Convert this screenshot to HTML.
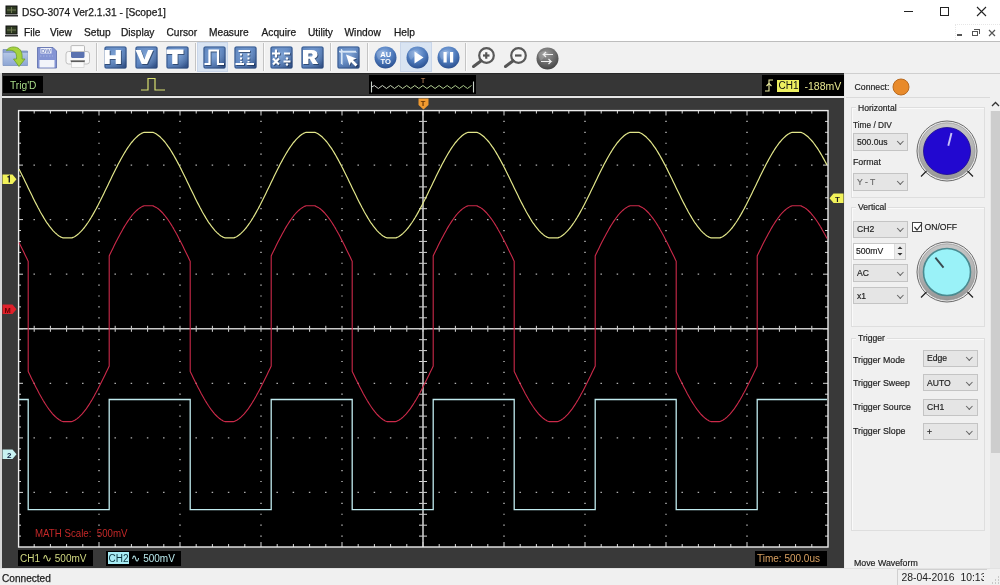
<!DOCTYPE html>
<html><head><meta charset="utf-8">
<style>
*{box-sizing:border-box}
html,body{margin:0;padding:0}
body{will-change:transform;width:1000px;height:585px;overflow:hidden;position:relative;background:#f0f0f0;font-family:"Liberation Sans",sans-serif;color:#1a1a1a}
.a{position:absolute}
.t{position:absolute;white-space:nowrap;line-height:1}
.d{-webkit-text-stroke:0.25px #1a1a1a}
#title{left:0;top:0;width:1000px;height:41px;background:#fff}
#tool{left:0;top:41px;width:1000px;height:32px;background:#f1f1f1;border-top:1px solid #bdbdbd}
#scope{left:0;top:73px;width:844px;height:495px;background:#393939;border-left:2px solid #d6d6d6}
#trig{left:2px;top:73px;width:842px;height:22.5px;background:#363636;border-top:1px solid #282828;border-bottom:1px solid #2a2a2a}
#wline{left:2px;top:95.5px;width:842px;height:2px;background:#e6e6e6}
#panel{left:844px;top:73px;width:156px;height:495px;background:#f0f0f0}
#status{left:0;top:568px;width:1000px;height:17px;background:#f0f0f0;border-top:1px solid #e2e2e2}
.combo{position:absolute;background:#e5e5e5;border:1px solid #c4c4c4}
.combo span{position:absolute;left:3px;top:50%;transform:translateY(-50%);font-size:8.6px;color:#222;-webkit-text-stroke:0.18px #222}
.chev{position:absolute;right:4.5px;top:50%;width:4.6px;height:4.6px;border-right:1px solid #666;border-bottom:1px solid #666;transform:translateY(-70%) rotate(45deg)}
.grp{position:absolute;border:1px solid #dedede;box-shadow:inset 1px 1px 0 #fafafa}
.lbl{position:absolute;white-space:nowrap;line-height:1;font-size:8.8px;color:#222;-webkit-text-stroke:0.18px #222}
</style></head><body>
<div id="title" class="a"></div>
<!-- title icon -->
<svg class="a" style="left:5px;top:5px" width="13" height="13" viewBox="0 0 13 13"><rect x="1" y="1" width="11" height="8" fill="#2e3a22" stroke="#111" stroke-width="1"/><path d="M2,5h9M6.5,2v6" stroke="#6f7a52" stroke-width="1"/><rect x="0" y="10" width="13" height="1.5" fill="#333"/></svg>
<div class="t d" style="left:22px;top:8px;font-size:10.2px;color:#1a1a1a">DSO-3074 Ver2.1.31 - [Scope1]</div>
<!-- window controls -->
<div class="a" style="left:904px;top:11px;width:9px;height:1px;background:#222"></div>
<div class="a" style="left:940px;top:7px;width:9px;height:9px;border:1px solid #222"></div>
<svg class="a" style="left:976px;top:6px" width="11" height="11"><path d="M1,1L10,10M10,1L1,10" stroke="#222" stroke-width="1.1"/></svg>
<!-- menu -->
<svg class="a" style="left:5px;top:25px" width="13" height="13" viewBox="0 0 13 13"><rect x="1" y="1" width="11" height="8" fill="#2e3a22" stroke="#111" stroke-width="1"/><path d="M2,5h9M6.5,2v6" stroke="#6f7a52" stroke-width="1"/><rect x="0" y="10" width="13" height="1.5" fill="#333"/></svg>
<div class="t d" style="left:24px;top:28px;font-size:10.2px">File</div>
<div class="t d" style="left:50px;top:28px;font-size:10.2px">View</div>
<div class="t d" style="left:84px;top:28px;font-size:10.2px">Setup</div>
<div class="t d" style="left:121px;top:28px;font-size:10.2px">Display</div>
<div class="t d" style="left:166.5px;top:28px;font-size:10.2px">Cursor</div>
<div class="t d" style="left:209px;top:28px;font-size:10.2px">Measure</div>
<div class="t d" style="left:261.5px;top:28px;font-size:10.2px">Acquire</div>
<div class="t d" style="left:308px;top:28px;font-size:10.2px">Utility</div>
<div class="t d" style="left:344.5px;top:28px;font-size:10.2px">Window</div>
<div class="t d" style="left:394px;top:28px;font-size:10.2px">Help</div>
<!-- mdi buttons -->
<div class="a" style="left:955px;top:24px;width:45px;height:16px;border-left:1px dotted #e6e6e6;border-top:1px dotted #e6e6e6"></div>
<div class="a" style="left:957px;top:34px;width:5px;height:1.5px;background:#555"></div>
<div class="a" style="left:972px;top:31px;width:6px;height:5px;border:1px solid #555"></div>
<div class="a" style="left:974px;top:29px;width:6px;height:5px;border-top:1px solid #555;border-right:1px solid #555"></div>
<svg class="a" style="left:988px;top:29px" width="8" height="8"><path d="M1,1L7,7M7,1L1,7" stroke="#555" stroke-width="1.2"/></svg>

<div id="tool" class="a"></div>
<svg class="a" style="left:2px;top:45px" width="27" height="23" viewBox="0 0 27 23">
<defs><linearGradient id="fold" x1="0" y1="0" x2="0" y2="1"><stop offset="0" stop-color="#b4c6e6"/><stop offset="1" stop-color="#8ea6d4"/></linearGradient></defs>
<path d="M1,4.5h8l1.5,1.5h15v14.5H1z" fill="#8ca2cc" stroke="#7088b8" stroke-width="0.7"/>
<path d="M1.3,8h24.4v12.2H1.3z" fill="url(#fold)"/>
<path d="M4.5,5.5C6,2 12,1 16,3C19.5,5 20.5,9 20,14h3l-6,7.5l-5.5,-7.5h3C15,10 14,7 11,5.8C9,5 6.5,5 4.5,5.5z" fill="#a6d23e" stroke="#6ca028" stroke-width="0.8"/>
</svg>
<svg class="a" style="left:37px;top:46.5px" width="21" height="22" viewBox="0 0 21 22">
<path d="M0.5,0.5h15.5l3.5,3.5v17H0.5z" fill="#8494d4" stroke="#6474b0" stroke-width="0.9"/>
<rect x="3.5" y="1" width="11" height="5.5" fill="#eef0fa"/><text x="4" y="6.2" font-size="6" font-weight="bold" font-family="Liberation Sans" fill="#8090c8">DW</text>
<path d="M3,9h13" stroke="#b0bce6" stroke-width="0.8" stroke-dasharray="1.5,1.5"/>
<rect x="2.5" y="13" width="15" height="7.5" fill="#f2f4fa"/>
</svg>
<svg class="a" style="left:65px;top:45px" width="26" height="24" viewBox="0 0 26 24">
<rect x="6" y="0.6" width="13.5" height="7.5" rx="1" fill="#fbfbfb" stroke="#a8a8a8" stroke-width="0.8"/>
<rect x="1" y="6.5" width="23.5" height="12.5" rx="2.5" fill="#f8f8f8" stroke="#b4b4b4" stroke-width="0.8"/>
<path d="M6,7h13.5v4.5c0,1 -1,1.5 -2,1.5h-9.5c-1,0 -2,-0.5 -2,-1.5z" fill="#5a72b0"/>
<path d="M5.5,15.5h14.5l-0.8,2h-13z" fill="#2e2e2e"/><rect x="6.5" y="17" width="12.5" height="5.5" fill="#fafafa" stroke="#c8c8c8" stroke-width="0.6"/>
</svg>
<div class="a" style="left:96px;top:43px;width:1px;height:28px;background:#c4c4c4"></div><div class="a" style="left:97px;top:43px;width:1px;height:28px;background:#fbfbfb"></div>
<div class="a" style="left:194.5px;top:43px;width:1px;height:28px;background:#c4c4c4"></div><div class="a" style="left:195.5px;top:43px;width:1px;height:28px;background:#fbfbfb"></div>
<div class="a" style="left:262.5px;top:43px;width:1px;height:28px;background:#c4c4c4"></div><div class="a" style="left:263.5px;top:43px;width:1px;height:28px;background:#fbfbfb"></div>
<div class="a" style="left:330px;top:43px;width:1px;height:28px;background:#c4c4c4"></div><div class="a" style="left:331px;top:43px;width:1px;height:28px;background:#fbfbfb"></div>
<div class="a" style="left:366.5px;top:43px;width:1px;height:28px;background:#c4c4c4"></div><div class="a" style="left:367.5px;top:43px;width:1px;height:28px;background:#fbfbfb"></div>
<div class="a" style="left:464.5px;top:43px;width:1px;height:28px;background:#c4c4c4"></div><div class="a" style="left:465.5px;top:43px;width:1px;height:28px;background:#fbfbfb"></div>
<div class="a" style="left:196.5px;top:42px;width:31.5px;height:30px;background:#d9e4f2;border:1px solid #c9d6ea"></div>
<div class="a" style="left:400px;top:42px;width:32px;height:30px;background:#d9e4f2;border:1px solid #c9d6ea"></div>
<svg class="a" style="left:103.5px;top:45.5px" width="23" height="23" viewBox="0 0 23 23">
<defs><linearGradient id="g103" x1="0" y1="0" x2="1" y2="1"><stop offset="0" stop-color="#5a82bc"/><stop offset="0.45" stop-color="#5c84c0"/><stop offset="1" stop-color="#2c4a7e"/></linearGradient>
<radialGradient id="h103" cx="50%" cy="40%" r="60%"><stop offset="0" stop-color="#8eb0dc" stop-opacity="0.7"/><stop offset="1" stop-color="#8eb0dc" stop-opacity="0"/></radialGradient>
<filter id="f103" x="-20%" y="-20%" width="140%" height="140%"><feGaussianBlur stdDeviation="0.45"/></filter></defs>
<g filter="url(#f103)"><rect x="0.5" y="0.5" width="22" height="22" rx="1.5" fill="url(#g103)"/>
<rect x="0.5" y="0.5" width="22" height="22" rx="1.5" fill="url(#h103)"/>
<rect x="1" y="1" width="21" height="21" rx="1.5" fill="none" stroke="#2a4674" stroke-width="1.2" stroke-opacity="0.6"/>
<g transform="translate(0.9,0.9)" opacity="0.55"><path d="M0.5,4h5.2v5.2h6V4h5.2v14h-5.2v-5h-6v5H0.5z" fill="#10203a"/></g>
<path d="M0.5,4h5.2v5.2h6V4h5.2v14h-5.2v-5h-6v5H0.5z" fill="#fff"/></g></svg>
<svg class="a" style="left:134.5px;top:45.5px" width="23" height="23" viewBox="0 0 23 23">
<defs><linearGradient id="g134" x1="0" y1="0" x2="1" y2="1"><stop offset="0" stop-color="#5a82bc"/><stop offset="0.45" stop-color="#5c84c0"/><stop offset="1" stop-color="#2c4a7e"/></linearGradient>
<radialGradient id="h134" cx="50%" cy="40%" r="60%"><stop offset="0" stop-color="#8eb0dc" stop-opacity="0.7"/><stop offset="1" stop-color="#8eb0dc" stop-opacity="0"/></radialGradient>
<filter id="f134" x="-20%" y="-20%" width="140%" height="140%"><feGaussianBlur stdDeviation="0.45"/></filter></defs>
<g filter="url(#f134)"><rect x="0.5" y="0.5" width="22" height="22" rx="1.5" fill="url(#g134)"/>
<rect x="0.5" y="0.5" width="22" height="22" rx="1.5" fill="url(#h134)"/>
<rect x="1" y="1" width="21" height="21" rx="1.5" fill="none" stroke="#2a4674" stroke-width="1.2" stroke-opacity="0.6"/>
<g transform="translate(0.9,0.9)" opacity="0.55"><path d="M0.5,4h5.3l3.6,9.5l3.6,-9.5h5.3l-6.2,14h-5.4z" fill="#10203a"/></g>
<path d="M0.5,4h5.3l3.6,9.5l3.6,-9.5h5.3l-6.2,14h-5.4z" fill="#fff"/></g></svg>
<svg class="a" style="left:166px;top:45.5px" width="23" height="23" viewBox="0 0 23 23">
<defs><linearGradient id="g166" x1="0" y1="0" x2="1" y2="1"><stop offset="0" stop-color="#5a82bc"/><stop offset="0.45" stop-color="#5c84c0"/><stop offset="1" stop-color="#2c4a7e"/></linearGradient>
<radialGradient id="h166" cx="50%" cy="40%" r="60%"><stop offset="0" stop-color="#8eb0dc" stop-opacity="0.7"/><stop offset="1" stop-color="#8eb0dc" stop-opacity="0"/></radialGradient>
<filter id="f166" x="-20%" y="-20%" width="140%" height="140%"><feGaussianBlur stdDeviation="0.45"/></filter></defs>
<g filter="url(#f166)"><rect x="0.5" y="0.5" width="22" height="22" rx="1.5" fill="url(#g166)"/>
<rect x="0.5" y="0.5" width="22" height="22" rx="1.5" fill="url(#h166)"/>
<rect x="1" y="1" width="21" height="21" rx="1.5" fill="none" stroke="#2a4674" stroke-width="1.2" stroke-opacity="0.6"/>
<g transform="translate(0.9,0.9)" opacity="0.55"><path d="M0.5,3.5h17v4.5h-5.9v10h-5.4v-10H0.5z" fill="#10203a"/></g>
<path d="M0.5,3.5h17v4.5h-5.9v10h-5.4v-10H0.5z" fill="#fff"/></g></svg>
<svg class="a" style="left:202.5px;top:45.5px" width="23" height="23" viewBox="0 0 23 23">
<defs><linearGradient id="g202" x1="0" y1="0" x2="1" y2="1"><stop offset="0" stop-color="#5a82bc"/><stop offset="0.45" stop-color="#5c84c0"/><stop offset="1" stop-color="#2c4a7e"/></linearGradient>
<radialGradient id="h202" cx="50%" cy="40%" r="60%"><stop offset="0" stop-color="#8eb0dc" stop-opacity="0.7"/><stop offset="1" stop-color="#8eb0dc" stop-opacity="0"/></radialGradient>
<filter id="f202" x="-20%" y="-20%" width="140%" height="140%"><feGaussianBlur stdDeviation="0.45"/></filter></defs>
<g filter="url(#f202)"><rect x="0.5" y="0.5" width="22" height="22" rx="1.5" fill="url(#g202)"/>
<rect x="0.5" y="0.5" width="22" height="22" rx="1.5" fill="url(#h202)"/>
<rect x="1" y="1" width="21" height="21" rx="1.5" fill="none" stroke="#2a4674" stroke-width="1.2" stroke-opacity="0.6"/>
<g transform="translate(0.9,0.9)" opacity="0.55"><path d="M1.5,18H6.5V4.5H15V18H21" stroke="#10203a" stroke-width="2.2" fill="none"/></g>
<path d="M1.5,18H6.5V4.5H15V18H21" stroke="#fff" stroke-width="2.2" fill="none"/></g></svg>
<svg class="a" style="left:233.5px;top:45.5px" width="23" height="23" viewBox="0 0 23 23">
<defs><linearGradient id="g233" x1="0" y1="0" x2="1" y2="1"><stop offset="0" stop-color="#5a82bc"/><stop offset="0.45" stop-color="#5c84c0"/><stop offset="1" stop-color="#2c4a7e"/></linearGradient>
<radialGradient id="h233" cx="50%" cy="40%" r="60%"><stop offset="0" stop-color="#8eb0dc" stop-opacity="0.7"/><stop offset="1" stop-color="#8eb0dc" stop-opacity="0"/></radialGradient>
<filter id="f233" x="-20%" y="-20%" width="140%" height="140%"><feGaussianBlur stdDeviation="0.45"/></filter></defs>
<g filter="url(#f233)"><rect x="0.5" y="0.5" width="22" height="22" rx="1.5" fill="url(#g233)"/>
<rect x="0.5" y="0.5" width="22" height="22" rx="1.5" fill="url(#h233)"/>
<rect x="1" y="1" width="21" height="21" rx="1.5" fill="none" stroke="#2a4674" stroke-width="1.2" stroke-opacity="0.6"/>
<g transform="translate(0.9,0.9)" opacity="0.55"><path d="M4.5,5H16M1.5,18H10M12.5,18H20" stroke="#10203a" stroke-width="2"/><path d="M7,7.5v2M7,11.5v2M7,15v1.5M14.5,7.5v2M14.5,11.5v2M14.5,15v1.5" stroke="#10203a" stroke-width="2"/></g>
<path d="M4.5,5H16M1.5,18H10M12.5,18H20" stroke="#fff" stroke-width="2"/><path d="M7,7.5v2M7,11.5v2M7,15v1.5M14.5,7.5v2M14.5,11.5v2M14.5,15v1.5" stroke="#fff" stroke-width="2"/></g></svg>
<svg class="a" style="left:269.5px;top:45.5px" width="23" height="23" viewBox="0 0 23 23">
<defs><linearGradient id="g269" x1="0" y1="0" x2="1" y2="1"><stop offset="0" stop-color="#5a82bc"/><stop offset="0.45" stop-color="#5c84c0"/><stop offset="1" stop-color="#2c4a7e"/></linearGradient>
<radialGradient id="h269" cx="50%" cy="40%" r="60%"><stop offset="0" stop-color="#8eb0dc" stop-opacity="0.7"/><stop offset="1" stop-color="#8eb0dc" stop-opacity="0"/></radialGradient>
<filter id="f269" x="-20%" y="-20%" width="140%" height="140%"><feGaussianBlur stdDeviation="0.45"/></filter></defs>
<g filter="url(#f269)"><rect x="0.5" y="0.5" width="22" height="22" rx="1.5" fill="url(#g269)"/>
<rect x="0.5" y="0.5" width="22" height="22" rx="1.5" fill="url(#h269)"/>
<rect x="1" y="1" width="21" height="21" rx="1.5" fill="none" stroke="#2a4674" stroke-width="1.2" stroke-opacity="0.6"/>
<g transform="translate(0.9,0.9)" opacity="0.55"><path d="M2,7.5h8M6,3.5v8M14,7.5h6M3,12.5l6,6M9,12.5l-6,6M13.5,15.5h7" stroke="#10203a" stroke-width="2.2"/><circle cx="17" cy="12.5" r="1.2" fill="#10203a"/><circle cx="17" cy="18.5" r="1.2" fill="#10203a"/></g>
<path d="M2,7.5h8M6,3.5v8M14,7.5h6M3,12.5l6,6M9,12.5l-6,6M13.5,15.5h7" stroke="#fff" stroke-width="2.2"/><circle cx="17" cy="12.5" r="1.2" fill="#fff"/><circle cx="17" cy="18.5" r="1.2" fill="#fff"/></g></svg>
<svg class="a" style="left:300.5px;top:45.5px" width="23" height="23" viewBox="0 0 23 23">
<defs><linearGradient id="g300" x1="0" y1="0" x2="1" y2="1"><stop offset="0" stop-color="#5a82bc"/><stop offset="0.45" stop-color="#5c84c0"/><stop offset="1" stop-color="#2c4a7e"/></linearGradient>
<radialGradient id="h300" cx="50%" cy="40%" r="60%"><stop offset="0" stop-color="#8eb0dc" stop-opacity="0.7"/><stop offset="1" stop-color="#8eb0dc" stop-opacity="0"/></radialGradient>
<filter id="f300" x="-20%" y="-20%" width="140%" height="140%"><feGaussianBlur stdDeviation="0.45"/></filter></defs>
<g filter="url(#f300)"><rect x="0.5" y="0.5" width="22" height="22" rx="1.5" fill="url(#g300)"/>
<rect x="0.5" y="0.5" width="22" height="22" rx="1.5" fill="url(#h300)"/>
<rect x="1" y="1" width="21" height="21" rx="1.5" fill="none" stroke="#2a4674" stroke-width="1.2" stroke-opacity="0.6"/>
<g transform="translate(0.9,0.9)" opacity="0.55"><path d="M2,4h8.5c4,0 6,1.6 6,4.4c0,2 -1.2,3.2 -3,3.8l3.8,5.8h-5.6l-3,-5.2h-1.3v5.2H2z M7.4,7.6v3h2.4c1.2,0 1.8,-0.5 1.8,-1.5c0,-1 -0.6,-1.5 -1.8,-1.5z" fill-rule="evenodd" fill="#10203a"/></g>
<path d="M2,4h8.5c4,0 6,1.6 6,4.4c0,2 -1.2,3.2 -3,3.8l3.8,5.8h-5.6l-3,-5.2h-1.3v5.2H2z M7.4,7.6v3h2.4c1.2,0 1.8,-0.5 1.8,-1.5c0,-1 -0.6,-1.5 -1.8,-1.5z" fill-rule="evenodd" fill="#fff"/></g></svg>
<svg class="a" style="left:336.5px;top:45.5px" width="23" height="23" viewBox="0 0 23 23">
<defs><linearGradient id="g336" x1="0" y1="0" x2="1" y2="1"><stop offset="0" stop-color="#5a82bc"/><stop offset="0.45" stop-color="#5c84c0"/><stop offset="1" stop-color="#2c4a7e"/></linearGradient>
<radialGradient id="h336" cx="50%" cy="40%" r="60%"><stop offset="0" stop-color="#8eb0dc" stop-opacity="0.7"/><stop offset="1" stop-color="#8eb0dc" stop-opacity="0"/></radialGradient>
<filter id="f336" x="-20%" y="-20%" width="140%" height="140%"><feGaussianBlur stdDeviation="0.45"/></filter></defs>
<g filter="url(#f336)"><rect x="0.5" y="0.5" width="22" height="22" rx="1.5" fill="url(#g336)"/>
<rect x="0.5" y="0.5" width="22" height="22" rx="1.5" fill="url(#h336)"/>
<rect x="1" y="1" width="21" height="21" rx="1.5" fill="none" stroke="#2a4674" stroke-width="1.2" stroke-opacity="0.6"/>
<g transform="translate(0.9,0.9)" opacity="0.55"><path d="M2,5.5h17M4.5,3v15" stroke="#d8e6f6" stroke-width="1.3"/><path d="M9,8.5L19.5,12.5L16,14L20.5,18.5L18.5,20.5L14,16L12.5,19.5z" fill="#10203a"/></g>
<path d="M2,5.5h17M4.5,3v15" stroke="#d8e6f6" stroke-width="1.3"/><path d="M9,8.5L19.5,12.5L16,14L20.5,18.5L18.5,20.5L14,16L12.5,19.5z" fill="#fff"/></g></svg>
<svg class="a" style="left:373.5px;top:46px" width="23" height="23" viewBox="0 0 23 23">
<defs><radialGradient id="c373" cx="45%" cy="30%" r="75%"><stop offset="0" stop-color="#8cb0e2"/><stop offset="0.55" stop-color="#4c78ba"/><stop offset="1" stop-color="#274a88"/></radialGradient>
<filter id="cf373" x="-20%" y="-20%" width="140%" height="140%"><feGaussianBlur stdDeviation="0.4"/></filter></defs>
<g filter="url(#cf373)"><circle cx="11.5" cy="11.5" r="11" fill="url(#c373)"/>
<path d="M2.5,6.5C5,4 9,3.5 12,6L5,14C3,11.5 2,9 2.5,6.5z" fill="#fff" fill-opacity="0.18"/>
<text x="11.7" y="11" font-size="7.6" font-family="Liberation Sans" font-weight="bold" fill="#fff" text-anchor="middle">AU</text><text x="11.7" y="18.2" font-size="7.6" font-family="Liberation Sans" font-weight="bold" fill="#fff" text-anchor="middle">TO</text></g></svg>
<svg class="a" style="left:405.5px;top:46px" width="23" height="23" viewBox="0 0 23 23">
<defs><radialGradient id="c405" cx="45%" cy="30%" r="75%"><stop offset="0" stop-color="#8cb0e2"/><stop offset="0.55" stop-color="#4c78ba"/><stop offset="1" stop-color="#274a88"/></radialGradient>
<filter id="cf405" x="-20%" y="-20%" width="140%" height="140%"><feGaussianBlur stdDeviation="0.4"/></filter></defs>
<g filter="url(#cf405)"><circle cx="11.5" cy="11.5" r="11" fill="url(#c405)"/>
<path d="M2.5,6.5C5,4 9,3.5 12,6L5,14C3,11.5 2,9 2.5,6.5z" fill="#fff" fill-opacity="0.18"/>
<path d="M8.5,5.5L17.5,11.5L8.5,17.5z" fill="#fff"/></g></svg>
<svg class="a" style="left:436.5px;top:46px" width="23" height="23" viewBox="0 0 23 23">
<defs><radialGradient id="c436" cx="45%" cy="30%" r="75%"><stop offset="0" stop-color="#8cb0e2"/><stop offset="0.55" stop-color="#4c78ba"/><stop offset="1" stop-color="#274a88"/></radialGradient>
<filter id="cf436" x="-20%" y="-20%" width="140%" height="140%"><feGaussianBlur stdDeviation="0.4"/></filter></defs>
<g filter="url(#cf436)"><circle cx="11.5" cy="11.5" r="11" fill="url(#c436)"/>
<path d="M2.5,6.5C5,4 9,3.5 12,6L5,14C3,11.5 2,9 2.5,6.5z" fill="#fff" fill-opacity="0.18"/>
<rect x="6.5" y="6" width="3.2" height="10.5" fill="#fff"/><rect x="13" y="6" width="3.2" height="10.5" fill="#fff"/></g></svg>
<svg class="a" style="left:470px;top:46px" width="26" height="24" viewBox="0 0 26 24"><circle cx="16.5" cy="9.5" r="7.3" fill="#f6f6f6" stroke="#5a5a5a" stroke-width="2.2"/><path d="M11.2,14.8L3.5,20.5" stroke="#555" stroke-width="3" stroke-linecap="round"/><path d="M13,9.5h6.5" stroke="#555" stroke-width="2.2"/><path d="M16.25,6.25v6.5" stroke="#555" stroke-width="2.2"/></svg>
<svg class="a" style="left:501.5px;top:46px" width="26" height="24" viewBox="0 0 26 24"><circle cx="16.5" cy="9.5" r="7.3" fill="#f6f6f6" stroke="#5a5a5a" stroke-width="2.2"/><path d="M11.2,14.8L3.5,20.5" stroke="#555" stroke-width="3" stroke-linecap="round"/><path d="M13,9.5h6.5" stroke="#555" stroke-width="2.2"/></svg>
<svg class="a" style="left:535.5px;top:46.5px" width="23" height="23" viewBox="0 0 23 23">
<defs><radialGradient id="c535" cx="45%" cy="30%" r="75%"><stop offset="0" stop-color="#9a9a9a"/><stop offset="0.55" stop-color="#6a6a6a"/><stop offset="1" stop-color="#3e3e3e"/></radialGradient>
<filter id="cf535" x="-20%" y="-20%" width="140%" height="140%"><feGaussianBlur stdDeviation="0.4"/></filter></defs>
<g filter="url(#cf535)"><circle cx="11.5" cy="11.5" r="11" fill="url(#c535)"/>
<path d="M2.5,6.5C5,4 9,3.5 12,6L5,14C3,11.5 2,9 2.5,6.5z" fill="#fff" fill-opacity="0.18"/>
<path d="M17,7.5H7.5l2.5,-2.5M7.5,7.5l2.5,2.5M5,14.5h10l-2.5,-2.5M15,14.5l-2.5,2.5" stroke="#f0f0f0" stroke-width="1.2" fill="none"/></g></svg>

<div id="scope" class="a"></div>
<div id="trig" class="a"></div>
<div class="a" style="left:2.5px;top:76px;width:40.5px;height:17px;background:#000"></div>
<div class="t" style="left:10px;top:80.5px;font-size:10.2px;color:#a8dc88">Trig'D</div>
<svg class="a" style="left:140px;top:76px" width="28" height="16"><path d="M1,14H8V2.5H15V14H25" stroke="#d8e070" stroke-width="1.2" fill="none"/></svg>
<div class="a" style="left:369px;top:75px;width:107px;height:19px;background:#000"></div>
<svg class="a" style="left:369px;top:75px" width="107" height="19">
<text x="54" y="7.5" font-size="7.5" fill="#d89868" font-family="Liberation Sans" text-anchor="middle">T</text>
<path d="M2.5,6.5v11M104.5,6.5v11" stroke="#c8d0c8" stroke-width="1.1"/>
<defs><linearGradient id="zz" x1="0" x2="1"><stop offset="0" stop-color="#d8d8d8"/><stop offset="0.35" stop-color="#b8d098"/><stop offset="1" stop-color="#a8c888"/></linearGradient></defs><polyline points="2.8,12 5.30,10.5 9.35,13.5 13.40,10.5 17.45,13.5 21.50,10.5 25.55,13.5 29.60,10.5 33.65,13.5 37.70,10.5 41.75,13.5 45.80,10.5 49.85,13.5 53.90,10.5 57.95,13.5 62.00,10.5 66.05,13.5 70.10,10.5 74.15,13.5 78.20,10.5 82.25,13.5 86.30,10.5 90.35,13.5 94.40,10.5 98.45,13.5 102.50,10.5" stroke="url(#zz)" stroke-width="1" fill="none"/>
</svg>
<div class="a" style="left:762px;top:74.5px;width:82px;height:21px;background:#000"></div>
<svg class="a" style="left:764px;top:77px" width="12" height="16"><path d="M1,14H5V3H9" stroke="#f0f0a0" stroke-width="1.1" fill="none"/><path d="M2.5,9L5,6.5L7.5,9" stroke="#f0f0a0" stroke-width="1.1" fill="none"/></svg>
<div class="a" style="left:777px;top:79.5px;width:22px;height:12.5px;background:#eef060"></div>
<div class="t" style="left:778.5px;top:81px;font-size:10px;color:#111">CH1</div>
<div class="t" style="left:804.5px;top:81.3px;font-size:10.5px;color:#e8e890">-188mV</div>
<div id="wline" class="a"></div>

<svg width="1000" height="585" viewBox="0 0 1000 585" style="position:absolute;left:0;top:0">
<rect x="18" y="110.5" width="810" height="436.5" fill="#000"/>
<path d="M98.25,120.81h1.5v1.2h-1.5zM98.25,131.72h1.5v1.2h-1.5zM98.25,142.64h1.5v1.2h-1.5zM98.25,153.55h1.5v1.2h-1.5zM98.25,164.46h1.5v1.2h-1.5zM98.25,175.38h1.5v1.2h-1.5zM98.25,186.29h1.5v1.2h-1.5zM98.25,197.20h1.5v1.2h-1.5zM98.25,208.11h1.5v1.2h-1.5zM98.25,219.03h1.5v1.2h-1.5zM98.25,229.94h1.5v1.2h-1.5zM98.25,240.85h1.5v1.2h-1.5zM98.25,251.76h1.5v1.2h-1.5zM98.25,262.67h1.5v1.2h-1.5zM98.25,273.59h1.5v1.2h-1.5zM98.25,284.50h1.5v1.2h-1.5zM98.25,295.41h1.5v1.2h-1.5zM98.25,306.32h1.5v1.2h-1.5zM98.25,317.24h1.5v1.2h-1.5zM98.25,339.06h1.5v1.2h-1.5zM98.25,349.97h1.5v1.2h-1.5zM98.25,360.89h1.5v1.2h-1.5zM98.25,371.80h1.5v1.2h-1.5zM98.25,382.71h1.5v1.2h-1.5zM98.25,393.62h1.5v1.2h-1.5zM98.25,404.54h1.5v1.2h-1.5zM98.25,415.45h1.5v1.2h-1.5zM98.25,426.36h1.5v1.2h-1.5zM98.25,437.27h1.5v1.2h-1.5zM98.25,448.19h1.5v1.2h-1.5zM98.25,459.10h1.5v1.2h-1.5zM98.25,470.01h1.5v1.2h-1.5zM98.25,480.92h1.5v1.2h-1.5zM98.25,491.84h1.5v1.2h-1.5zM98.25,502.75h1.5v1.2h-1.5zM98.25,513.66h1.5v1.2h-1.5zM98.25,524.57h1.5v1.2h-1.5zM98.25,535.49h1.5v1.2h-1.5zM179.25,120.81h1.5v1.2h-1.5zM179.25,131.72h1.5v1.2h-1.5zM179.25,142.64h1.5v1.2h-1.5zM179.25,153.55h1.5v1.2h-1.5zM179.25,164.46h1.5v1.2h-1.5zM179.25,175.38h1.5v1.2h-1.5zM179.25,186.29h1.5v1.2h-1.5zM179.25,197.20h1.5v1.2h-1.5zM179.25,208.11h1.5v1.2h-1.5zM179.25,219.03h1.5v1.2h-1.5zM179.25,229.94h1.5v1.2h-1.5zM179.25,240.85h1.5v1.2h-1.5zM179.25,251.76h1.5v1.2h-1.5zM179.25,262.67h1.5v1.2h-1.5zM179.25,273.59h1.5v1.2h-1.5zM179.25,284.50h1.5v1.2h-1.5zM179.25,295.41h1.5v1.2h-1.5zM179.25,306.32h1.5v1.2h-1.5zM179.25,317.24h1.5v1.2h-1.5zM179.25,339.06h1.5v1.2h-1.5zM179.25,349.97h1.5v1.2h-1.5zM179.25,360.89h1.5v1.2h-1.5zM179.25,371.80h1.5v1.2h-1.5zM179.25,382.71h1.5v1.2h-1.5zM179.25,393.62h1.5v1.2h-1.5zM179.25,404.54h1.5v1.2h-1.5zM179.25,415.45h1.5v1.2h-1.5zM179.25,426.36h1.5v1.2h-1.5zM179.25,437.27h1.5v1.2h-1.5zM179.25,448.19h1.5v1.2h-1.5zM179.25,459.10h1.5v1.2h-1.5zM179.25,470.01h1.5v1.2h-1.5zM179.25,480.92h1.5v1.2h-1.5zM179.25,491.84h1.5v1.2h-1.5zM179.25,502.75h1.5v1.2h-1.5zM179.25,513.66h1.5v1.2h-1.5zM179.25,524.57h1.5v1.2h-1.5zM179.25,535.49h1.5v1.2h-1.5zM260.25,120.81h1.5v1.2h-1.5zM260.25,131.72h1.5v1.2h-1.5zM260.25,142.64h1.5v1.2h-1.5zM260.25,153.55h1.5v1.2h-1.5zM260.25,164.46h1.5v1.2h-1.5zM260.25,175.38h1.5v1.2h-1.5zM260.25,186.29h1.5v1.2h-1.5zM260.25,197.20h1.5v1.2h-1.5zM260.25,208.11h1.5v1.2h-1.5zM260.25,219.03h1.5v1.2h-1.5zM260.25,229.94h1.5v1.2h-1.5zM260.25,240.85h1.5v1.2h-1.5zM260.25,251.76h1.5v1.2h-1.5zM260.25,262.67h1.5v1.2h-1.5zM260.25,273.59h1.5v1.2h-1.5zM260.25,284.50h1.5v1.2h-1.5zM260.25,295.41h1.5v1.2h-1.5zM260.25,306.32h1.5v1.2h-1.5zM260.25,317.24h1.5v1.2h-1.5zM260.25,339.06h1.5v1.2h-1.5zM260.25,349.97h1.5v1.2h-1.5zM260.25,360.89h1.5v1.2h-1.5zM260.25,371.80h1.5v1.2h-1.5zM260.25,382.71h1.5v1.2h-1.5zM260.25,393.62h1.5v1.2h-1.5zM260.25,404.54h1.5v1.2h-1.5zM260.25,415.45h1.5v1.2h-1.5zM260.25,426.36h1.5v1.2h-1.5zM260.25,437.27h1.5v1.2h-1.5zM260.25,448.19h1.5v1.2h-1.5zM260.25,459.10h1.5v1.2h-1.5zM260.25,470.01h1.5v1.2h-1.5zM260.25,480.92h1.5v1.2h-1.5zM260.25,491.84h1.5v1.2h-1.5zM260.25,502.75h1.5v1.2h-1.5zM260.25,513.66h1.5v1.2h-1.5zM260.25,524.57h1.5v1.2h-1.5zM260.25,535.49h1.5v1.2h-1.5zM341.25,120.81h1.5v1.2h-1.5zM341.25,131.72h1.5v1.2h-1.5zM341.25,142.64h1.5v1.2h-1.5zM341.25,153.55h1.5v1.2h-1.5zM341.25,164.46h1.5v1.2h-1.5zM341.25,175.38h1.5v1.2h-1.5zM341.25,186.29h1.5v1.2h-1.5zM341.25,197.20h1.5v1.2h-1.5zM341.25,208.11h1.5v1.2h-1.5zM341.25,219.03h1.5v1.2h-1.5zM341.25,229.94h1.5v1.2h-1.5zM341.25,240.85h1.5v1.2h-1.5zM341.25,251.76h1.5v1.2h-1.5zM341.25,262.67h1.5v1.2h-1.5zM341.25,273.59h1.5v1.2h-1.5zM341.25,284.50h1.5v1.2h-1.5zM341.25,295.41h1.5v1.2h-1.5zM341.25,306.32h1.5v1.2h-1.5zM341.25,317.24h1.5v1.2h-1.5zM341.25,339.06h1.5v1.2h-1.5zM341.25,349.97h1.5v1.2h-1.5zM341.25,360.89h1.5v1.2h-1.5zM341.25,371.80h1.5v1.2h-1.5zM341.25,382.71h1.5v1.2h-1.5zM341.25,393.62h1.5v1.2h-1.5zM341.25,404.54h1.5v1.2h-1.5zM341.25,415.45h1.5v1.2h-1.5zM341.25,426.36h1.5v1.2h-1.5zM341.25,437.27h1.5v1.2h-1.5zM341.25,448.19h1.5v1.2h-1.5zM341.25,459.10h1.5v1.2h-1.5zM341.25,470.01h1.5v1.2h-1.5zM341.25,480.92h1.5v1.2h-1.5zM341.25,491.84h1.5v1.2h-1.5zM341.25,502.75h1.5v1.2h-1.5zM341.25,513.66h1.5v1.2h-1.5zM341.25,524.57h1.5v1.2h-1.5zM341.25,535.49h1.5v1.2h-1.5zM503.25,120.81h1.5v1.2h-1.5zM503.25,131.72h1.5v1.2h-1.5zM503.25,142.64h1.5v1.2h-1.5zM503.25,153.55h1.5v1.2h-1.5zM503.25,164.46h1.5v1.2h-1.5zM503.25,175.38h1.5v1.2h-1.5zM503.25,186.29h1.5v1.2h-1.5zM503.25,197.20h1.5v1.2h-1.5zM503.25,208.11h1.5v1.2h-1.5zM503.25,219.03h1.5v1.2h-1.5zM503.25,229.94h1.5v1.2h-1.5zM503.25,240.85h1.5v1.2h-1.5zM503.25,251.76h1.5v1.2h-1.5zM503.25,262.67h1.5v1.2h-1.5zM503.25,273.59h1.5v1.2h-1.5zM503.25,284.50h1.5v1.2h-1.5zM503.25,295.41h1.5v1.2h-1.5zM503.25,306.32h1.5v1.2h-1.5zM503.25,317.24h1.5v1.2h-1.5zM503.25,339.06h1.5v1.2h-1.5zM503.25,349.97h1.5v1.2h-1.5zM503.25,360.89h1.5v1.2h-1.5zM503.25,371.80h1.5v1.2h-1.5zM503.25,382.71h1.5v1.2h-1.5zM503.25,393.62h1.5v1.2h-1.5zM503.25,404.54h1.5v1.2h-1.5zM503.25,415.45h1.5v1.2h-1.5zM503.25,426.36h1.5v1.2h-1.5zM503.25,437.27h1.5v1.2h-1.5zM503.25,448.19h1.5v1.2h-1.5zM503.25,459.10h1.5v1.2h-1.5zM503.25,470.01h1.5v1.2h-1.5zM503.25,480.92h1.5v1.2h-1.5zM503.25,491.84h1.5v1.2h-1.5zM503.25,502.75h1.5v1.2h-1.5zM503.25,513.66h1.5v1.2h-1.5zM503.25,524.57h1.5v1.2h-1.5zM503.25,535.49h1.5v1.2h-1.5zM584.25,120.81h1.5v1.2h-1.5zM584.25,131.72h1.5v1.2h-1.5zM584.25,142.64h1.5v1.2h-1.5zM584.25,153.55h1.5v1.2h-1.5zM584.25,164.46h1.5v1.2h-1.5zM584.25,175.38h1.5v1.2h-1.5zM584.25,186.29h1.5v1.2h-1.5zM584.25,197.20h1.5v1.2h-1.5zM584.25,208.11h1.5v1.2h-1.5zM584.25,219.03h1.5v1.2h-1.5zM584.25,229.94h1.5v1.2h-1.5zM584.25,240.85h1.5v1.2h-1.5zM584.25,251.76h1.5v1.2h-1.5zM584.25,262.67h1.5v1.2h-1.5zM584.25,273.59h1.5v1.2h-1.5zM584.25,284.50h1.5v1.2h-1.5zM584.25,295.41h1.5v1.2h-1.5zM584.25,306.32h1.5v1.2h-1.5zM584.25,317.24h1.5v1.2h-1.5zM584.25,339.06h1.5v1.2h-1.5zM584.25,349.97h1.5v1.2h-1.5zM584.25,360.89h1.5v1.2h-1.5zM584.25,371.80h1.5v1.2h-1.5zM584.25,382.71h1.5v1.2h-1.5zM584.25,393.62h1.5v1.2h-1.5zM584.25,404.54h1.5v1.2h-1.5zM584.25,415.45h1.5v1.2h-1.5zM584.25,426.36h1.5v1.2h-1.5zM584.25,437.27h1.5v1.2h-1.5zM584.25,448.19h1.5v1.2h-1.5zM584.25,459.10h1.5v1.2h-1.5zM584.25,470.01h1.5v1.2h-1.5zM584.25,480.92h1.5v1.2h-1.5zM584.25,491.84h1.5v1.2h-1.5zM584.25,502.75h1.5v1.2h-1.5zM584.25,513.66h1.5v1.2h-1.5zM584.25,524.57h1.5v1.2h-1.5zM584.25,535.49h1.5v1.2h-1.5zM665.25,120.81h1.5v1.2h-1.5zM665.25,131.72h1.5v1.2h-1.5zM665.25,142.64h1.5v1.2h-1.5zM665.25,153.55h1.5v1.2h-1.5zM665.25,164.46h1.5v1.2h-1.5zM665.25,175.38h1.5v1.2h-1.5zM665.25,186.29h1.5v1.2h-1.5zM665.25,197.20h1.5v1.2h-1.5zM665.25,208.11h1.5v1.2h-1.5zM665.25,219.03h1.5v1.2h-1.5zM665.25,229.94h1.5v1.2h-1.5zM665.25,240.85h1.5v1.2h-1.5zM665.25,251.76h1.5v1.2h-1.5zM665.25,262.67h1.5v1.2h-1.5zM665.25,273.59h1.5v1.2h-1.5zM665.25,284.50h1.5v1.2h-1.5zM665.25,295.41h1.5v1.2h-1.5zM665.25,306.32h1.5v1.2h-1.5zM665.25,317.24h1.5v1.2h-1.5zM665.25,339.06h1.5v1.2h-1.5zM665.25,349.97h1.5v1.2h-1.5zM665.25,360.89h1.5v1.2h-1.5zM665.25,371.80h1.5v1.2h-1.5zM665.25,382.71h1.5v1.2h-1.5zM665.25,393.62h1.5v1.2h-1.5zM665.25,404.54h1.5v1.2h-1.5zM665.25,415.45h1.5v1.2h-1.5zM665.25,426.36h1.5v1.2h-1.5zM665.25,437.27h1.5v1.2h-1.5zM665.25,448.19h1.5v1.2h-1.5zM665.25,459.10h1.5v1.2h-1.5zM665.25,470.01h1.5v1.2h-1.5zM665.25,480.92h1.5v1.2h-1.5zM665.25,491.84h1.5v1.2h-1.5zM665.25,502.75h1.5v1.2h-1.5zM665.25,513.66h1.5v1.2h-1.5zM665.25,524.57h1.5v1.2h-1.5zM665.25,535.49h1.5v1.2h-1.5zM746.25,120.81h1.5v1.2h-1.5zM746.25,131.72h1.5v1.2h-1.5zM746.25,142.64h1.5v1.2h-1.5zM746.25,153.55h1.5v1.2h-1.5zM746.25,164.46h1.5v1.2h-1.5zM746.25,175.38h1.5v1.2h-1.5zM746.25,186.29h1.5v1.2h-1.5zM746.25,197.20h1.5v1.2h-1.5zM746.25,208.11h1.5v1.2h-1.5zM746.25,219.03h1.5v1.2h-1.5zM746.25,229.94h1.5v1.2h-1.5zM746.25,240.85h1.5v1.2h-1.5zM746.25,251.76h1.5v1.2h-1.5zM746.25,262.67h1.5v1.2h-1.5zM746.25,273.59h1.5v1.2h-1.5zM746.25,284.50h1.5v1.2h-1.5zM746.25,295.41h1.5v1.2h-1.5zM746.25,306.32h1.5v1.2h-1.5zM746.25,317.24h1.5v1.2h-1.5zM746.25,339.06h1.5v1.2h-1.5zM746.25,349.97h1.5v1.2h-1.5zM746.25,360.89h1.5v1.2h-1.5zM746.25,371.80h1.5v1.2h-1.5zM746.25,382.71h1.5v1.2h-1.5zM746.25,393.62h1.5v1.2h-1.5zM746.25,404.54h1.5v1.2h-1.5zM746.25,415.45h1.5v1.2h-1.5zM746.25,426.36h1.5v1.2h-1.5zM746.25,437.27h1.5v1.2h-1.5zM746.25,448.19h1.5v1.2h-1.5zM746.25,459.10h1.5v1.2h-1.5zM746.25,470.01h1.5v1.2h-1.5zM746.25,480.92h1.5v1.2h-1.5zM746.25,491.84h1.5v1.2h-1.5zM746.25,502.75h1.5v1.2h-1.5zM746.25,513.66h1.5v1.2h-1.5zM746.25,524.57h1.5v1.2h-1.5zM746.25,535.49h1.5v1.2h-1.5zM33.45,164.46h1.5v1.2h-1.5zM49.65,164.46h1.5v1.2h-1.5zM65.85,164.46h1.5v1.2h-1.5zM82.05,164.46h1.5v1.2h-1.5zM98.25,164.46h1.5v1.2h-1.5zM114.45,164.46h1.5v1.2h-1.5zM130.65,164.46h1.5v1.2h-1.5zM146.85,164.46h1.5v1.2h-1.5zM163.05,164.46h1.5v1.2h-1.5zM179.25,164.46h1.5v1.2h-1.5zM195.45,164.46h1.5v1.2h-1.5zM211.65,164.46h1.5v1.2h-1.5zM227.85,164.46h1.5v1.2h-1.5zM244.05,164.46h1.5v1.2h-1.5zM260.25,164.46h1.5v1.2h-1.5zM276.45,164.46h1.5v1.2h-1.5zM292.65,164.46h1.5v1.2h-1.5zM308.85,164.46h1.5v1.2h-1.5zM325.05,164.46h1.5v1.2h-1.5zM341.25,164.46h1.5v1.2h-1.5zM357.45,164.46h1.5v1.2h-1.5zM373.65,164.46h1.5v1.2h-1.5zM389.85,164.46h1.5v1.2h-1.5zM406.05,164.46h1.5v1.2h-1.5zM438.45,164.46h1.5v1.2h-1.5zM454.65,164.46h1.5v1.2h-1.5zM470.85,164.46h1.5v1.2h-1.5zM487.05,164.46h1.5v1.2h-1.5zM503.25,164.46h1.5v1.2h-1.5zM519.45,164.46h1.5v1.2h-1.5zM535.65,164.46h1.5v1.2h-1.5zM551.85,164.46h1.5v1.2h-1.5zM568.05,164.46h1.5v1.2h-1.5zM584.25,164.46h1.5v1.2h-1.5zM600.45,164.46h1.5v1.2h-1.5zM616.65,164.46h1.5v1.2h-1.5zM632.85,164.46h1.5v1.2h-1.5zM649.05,164.46h1.5v1.2h-1.5zM665.25,164.46h1.5v1.2h-1.5zM681.45,164.46h1.5v1.2h-1.5zM697.65,164.46h1.5v1.2h-1.5zM713.85,164.46h1.5v1.2h-1.5zM730.05,164.46h1.5v1.2h-1.5zM746.25,164.46h1.5v1.2h-1.5zM762.45,164.46h1.5v1.2h-1.5zM778.65,164.46h1.5v1.2h-1.5zM794.85,164.46h1.5v1.2h-1.5zM811.05,164.46h1.5v1.2h-1.5zM33.45,219.03h1.5v1.2h-1.5zM49.65,219.03h1.5v1.2h-1.5zM65.85,219.03h1.5v1.2h-1.5zM82.05,219.03h1.5v1.2h-1.5zM98.25,219.03h1.5v1.2h-1.5zM114.45,219.03h1.5v1.2h-1.5zM130.65,219.03h1.5v1.2h-1.5zM146.85,219.03h1.5v1.2h-1.5zM163.05,219.03h1.5v1.2h-1.5zM179.25,219.03h1.5v1.2h-1.5zM195.45,219.03h1.5v1.2h-1.5zM211.65,219.03h1.5v1.2h-1.5zM227.85,219.03h1.5v1.2h-1.5zM244.05,219.03h1.5v1.2h-1.5zM260.25,219.03h1.5v1.2h-1.5zM276.45,219.03h1.5v1.2h-1.5zM292.65,219.03h1.5v1.2h-1.5zM308.85,219.03h1.5v1.2h-1.5zM325.05,219.03h1.5v1.2h-1.5zM341.25,219.03h1.5v1.2h-1.5zM357.45,219.03h1.5v1.2h-1.5zM373.65,219.03h1.5v1.2h-1.5zM389.85,219.03h1.5v1.2h-1.5zM406.05,219.03h1.5v1.2h-1.5zM438.45,219.03h1.5v1.2h-1.5zM454.65,219.03h1.5v1.2h-1.5zM470.85,219.03h1.5v1.2h-1.5zM487.05,219.03h1.5v1.2h-1.5zM503.25,219.03h1.5v1.2h-1.5zM519.45,219.03h1.5v1.2h-1.5zM535.65,219.03h1.5v1.2h-1.5zM551.85,219.03h1.5v1.2h-1.5zM568.05,219.03h1.5v1.2h-1.5zM584.25,219.03h1.5v1.2h-1.5zM600.45,219.03h1.5v1.2h-1.5zM616.65,219.03h1.5v1.2h-1.5zM632.85,219.03h1.5v1.2h-1.5zM649.05,219.03h1.5v1.2h-1.5zM665.25,219.03h1.5v1.2h-1.5zM681.45,219.03h1.5v1.2h-1.5zM697.65,219.03h1.5v1.2h-1.5zM713.85,219.03h1.5v1.2h-1.5zM730.05,219.03h1.5v1.2h-1.5zM746.25,219.03h1.5v1.2h-1.5zM762.45,219.03h1.5v1.2h-1.5zM778.65,219.03h1.5v1.2h-1.5zM794.85,219.03h1.5v1.2h-1.5zM811.05,219.03h1.5v1.2h-1.5zM33.45,273.59h1.5v1.2h-1.5zM49.65,273.59h1.5v1.2h-1.5zM65.85,273.59h1.5v1.2h-1.5zM82.05,273.59h1.5v1.2h-1.5zM98.25,273.59h1.5v1.2h-1.5zM114.45,273.59h1.5v1.2h-1.5zM130.65,273.59h1.5v1.2h-1.5zM146.85,273.59h1.5v1.2h-1.5zM163.05,273.59h1.5v1.2h-1.5zM179.25,273.59h1.5v1.2h-1.5zM195.45,273.59h1.5v1.2h-1.5zM211.65,273.59h1.5v1.2h-1.5zM227.85,273.59h1.5v1.2h-1.5zM244.05,273.59h1.5v1.2h-1.5zM260.25,273.59h1.5v1.2h-1.5zM276.45,273.59h1.5v1.2h-1.5zM292.65,273.59h1.5v1.2h-1.5zM308.85,273.59h1.5v1.2h-1.5zM325.05,273.59h1.5v1.2h-1.5zM341.25,273.59h1.5v1.2h-1.5zM357.45,273.59h1.5v1.2h-1.5zM373.65,273.59h1.5v1.2h-1.5zM389.85,273.59h1.5v1.2h-1.5zM406.05,273.59h1.5v1.2h-1.5zM438.45,273.59h1.5v1.2h-1.5zM454.65,273.59h1.5v1.2h-1.5zM470.85,273.59h1.5v1.2h-1.5zM487.05,273.59h1.5v1.2h-1.5zM503.25,273.59h1.5v1.2h-1.5zM519.45,273.59h1.5v1.2h-1.5zM535.65,273.59h1.5v1.2h-1.5zM551.85,273.59h1.5v1.2h-1.5zM568.05,273.59h1.5v1.2h-1.5zM584.25,273.59h1.5v1.2h-1.5zM600.45,273.59h1.5v1.2h-1.5zM616.65,273.59h1.5v1.2h-1.5zM632.85,273.59h1.5v1.2h-1.5zM649.05,273.59h1.5v1.2h-1.5zM665.25,273.59h1.5v1.2h-1.5zM681.45,273.59h1.5v1.2h-1.5zM697.65,273.59h1.5v1.2h-1.5zM713.85,273.59h1.5v1.2h-1.5zM730.05,273.59h1.5v1.2h-1.5zM746.25,273.59h1.5v1.2h-1.5zM762.45,273.59h1.5v1.2h-1.5zM778.65,273.59h1.5v1.2h-1.5zM794.85,273.59h1.5v1.2h-1.5zM811.05,273.59h1.5v1.2h-1.5zM33.45,382.71h1.5v1.2h-1.5zM49.65,382.71h1.5v1.2h-1.5zM65.85,382.71h1.5v1.2h-1.5zM82.05,382.71h1.5v1.2h-1.5zM98.25,382.71h1.5v1.2h-1.5zM114.45,382.71h1.5v1.2h-1.5zM130.65,382.71h1.5v1.2h-1.5zM146.85,382.71h1.5v1.2h-1.5zM163.05,382.71h1.5v1.2h-1.5zM179.25,382.71h1.5v1.2h-1.5zM195.45,382.71h1.5v1.2h-1.5zM211.65,382.71h1.5v1.2h-1.5zM227.85,382.71h1.5v1.2h-1.5zM244.05,382.71h1.5v1.2h-1.5zM260.25,382.71h1.5v1.2h-1.5zM276.45,382.71h1.5v1.2h-1.5zM292.65,382.71h1.5v1.2h-1.5zM308.85,382.71h1.5v1.2h-1.5zM325.05,382.71h1.5v1.2h-1.5zM341.25,382.71h1.5v1.2h-1.5zM357.45,382.71h1.5v1.2h-1.5zM373.65,382.71h1.5v1.2h-1.5zM389.85,382.71h1.5v1.2h-1.5zM406.05,382.71h1.5v1.2h-1.5zM438.45,382.71h1.5v1.2h-1.5zM454.65,382.71h1.5v1.2h-1.5zM470.85,382.71h1.5v1.2h-1.5zM487.05,382.71h1.5v1.2h-1.5zM503.25,382.71h1.5v1.2h-1.5zM519.45,382.71h1.5v1.2h-1.5zM535.65,382.71h1.5v1.2h-1.5zM551.85,382.71h1.5v1.2h-1.5zM568.05,382.71h1.5v1.2h-1.5zM584.25,382.71h1.5v1.2h-1.5zM600.45,382.71h1.5v1.2h-1.5zM616.65,382.71h1.5v1.2h-1.5zM632.85,382.71h1.5v1.2h-1.5zM649.05,382.71h1.5v1.2h-1.5zM665.25,382.71h1.5v1.2h-1.5zM681.45,382.71h1.5v1.2h-1.5zM697.65,382.71h1.5v1.2h-1.5zM713.85,382.71h1.5v1.2h-1.5zM730.05,382.71h1.5v1.2h-1.5zM746.25,382.71h1.5v1.2h-1.5zM762.45,382.71h1.5v1.2h-1.5zM778.65,382.71h1.5v1.2h-1.5zM794.85,382.71h1.5v1.2h-1.5zM811.05,382.71h1.5v1.2h-1.5zM33.45,437.27h1.5v1.2h-1.5zM49.65,437.27h1.5v1.2h-1.5zM65.85,437.27h1.5v1.2h-1.5zM82.05,437.27h1.5v1.2h-1.5zM98.25,437.27h1.5v1.2h-1.5zM114.45,437.27h1.5v1.2h-1.5zM130.65,437.27h1.5v1.2h-1.5zM146.85,437.27h1.5v1.2h-1.5zM163.05,437.27h1.5v1.2h-1.5zM179.25,437.27h1.5v1.2h-1.5zM195.45,437.27h1.5v1.2h-1.5zM211.65,437.27h1.5v1.2h-1.5zM227.85,437.27h1.5v1.2h-1.5zM244.05,437.27h1.5v1.2h-1.5zM260.25,437.27h1.5v1.2h-1.5zM276.45,437.27h1.5v1.2h-1.5zM292.65,437.27h1.5v1.2h-1.5zM308.85,437.27h1.5v1.2h-1.5zM325.05,437.27h1.5v1.2h-1.5zM341.25,437.27h1.5v1.2h-1.5zM357.45,437.27h1.5v1.2h-1.5zM373.65,437.27h1.5v1.2h-1.5zM389.85,437.27h1.5v1.2h-1.5zM406.05,437.27h1.5v1.2h-1.5zM438.45,437.27h1.5v1.2h-1.5zM454.65,437.27h1.5v1.2h-1.5zM470.85,437.27h1.5v1.2h-1.5zM487.05,437.27h1.5v1.2h-1.5zM503.25,437.27h1.5v1.2h-1.5zM519.45,437.27h1.5v1.2h-1.5zM535.65,437.27h1.5v1.2h-1.5zM551.85,437.27h1.5v1.2h-1.5zM568.05,437.27h1.5v1.2h-1.5zM584.25,437.27h1.5v1.2h-1.5zM600.45,437.27h1.5v1.2h-1.5zM616.65,437.27h1.5v1.2h-1.5zM632.85,437.27h1.5v1.2h-1.5zM649.05,437.27h1.5v1.2h-1.5zM665.25,437.27h1.5v1.2h-1.5zM681.45,437.27h1.5v1.2h-1.5zM697.65,437.27h1.5v1.2h-1.5zM713.85,437.27h1.5v1.2h-1.5zM730.05,437.27h1.5v1.2h-1.5zM746.25,437.27h1.5v1.2h-1.5zM762.45,437.27h1.5v1.2h-1.5zM778.65,437.27h1.5v1.2h-1.5zM794.85,437.27h1.5v1.2h-1.5zM811.05,437.27h1.5v1.2h-1.5zM33.45,491.84h1.5v1.2h-1.5zM49.65,491.84h1.5v1.2h-1.5zM65.85,491.84h1.5v1.2h-1.5zM82.05,491.84h1.5v1.2h-1.5zM98.25,491.84h1.5v1.2h-1.5zM114.45,491.84h1.5v1.2h-1.5zM130.65,491.84h1.5v1.2h-1.5zM146.85,491.84h1.5v1.2h-1.5zM163.05,491.84h1.5v1.2h-1.5zM179.25,491.84h1.5v1.2h-1.5zM195.45,491.84h1.5v1.2h-1.5zM211.65,491.84h1.5v1.2h-1.5zM227.85,491.84h1.5v1.2h-1.5zM244.05,491.84h1.5v1.2h-1.5zM260.25,491.84h1.5v1.2h-1.5zM276.45,491.84h1.5v1.2h-1.5zM292.65,491.84h1.5v1.2h-1.5zM308.85,491.84h1.5v1.2h-1.5zM325.05,491.84h1.5v1.2h-1.5zM341.25,491.84h1.5v1.2h-1.5zM357.45,491.84h1.5v1.2h-1.5zM373.65,491.84h1.5v1.2h-1.5zM389.85,491.84h1.5v1.2h-1.5zM406.05,491.84h1.5v1.2h-1.5zM438.45,491.84h1.5v1.2h-1.5zM454.65,491.84h1.5v1.2h-1.5zM470.85,491.84h1.5v1.2h-1.5zM487.05,491.84h1.5v1.2h-1.5zM503.25,491.84h1.5v1.2h-1.5zM519.45,491.84h1.5v1.2h-1.5zM535.65,491.84h1.5v1.2h-1.5zM551.85,491.84h1.5v1.2h-1.5zM568.05,491.84h1.5v1.2h-1.5zM584.25,491.84h1.5v1.2h-1.5zM600.45,491.84h1.5v1.2h-1.5zM616.65,491.84h1.5v1.2h-1.5zM632.85,491.84h1.5v1.2h-1.5zM649.05,491.84h1.5v1.2h-1.5zM665.25,491.84h1.5v1.2h-1.5zM681.45,491.84h1.5v1.2h-1.5zM697.65,491.84h1.5v1.2h-1.5zM713.85,491.84h1.5v1.2h-1.5zM730.05,491.84h1.5v1.2h-1.5zM746.25,491.84h1.5v1.2h-1.5zM762.45,491.84h1.5v1.2h-1.5zM778.65,491.84h1.5v1.2h-1.5zM794.85,491.84h1.5v1.2h-1.5zM811.05,491.84h1.5v1.2h-1.5z" fill="#b0b0b0"/>
<path d="M34.2,110.5v3M34.2,547v-3M34.2,325.8v6M50.4,110.5v3M50.4,547v-3M50.4,325.8v6M66.6,110.5v3M66.6,547v-3M66.6,325.8v6M82.8,110.5v3M82.8,547v-3M82.8,325.8v6M99.0,110.5v5M99.0,547v-5M99.0,325.8v6M115.2,110.5v3M115.2,547v-3M115.2,325.8v6M131.4,110.5v3M131.4,547v-3M131.4,325.8v6M147.6,110.5v3M147.6,547v-3M147.6,325.8v6M163.8,110.5v3M163.8,547v-3M163.8,325.8v6M180.0,110.5v5M180.0,547v-5M180.0,325.8v6M196.2,110.5v3M196.2,547v-3M196.2,325.8v6M212.4,110.5v3M212.4,547v-3M212.4,325.8v6M228.6,110.5v3M228.6,547v-3M228.6,325.8v6M244.8,110.5v3M244.8,547v-3M244.8,325.8v6M261.0,110.5v5M261.0,547v-5M261.0,325.8v6M277.2,110.5v3M277.2,547v-3M277.2,325.8v6M293.4,110.5v3M293.4,547v-3M293.4,325.8v6M309.6,110.5v3M309.6,547v-3M309.6,325.8v6M325.8,110.5v3M325.8,547v-3M325.8,325.8v6M342.0,110.5v5M342.0,547v-5M342.0,325.8v6M358.2,110.5v3M358.2,547v-3M358.2,325.8v6M374.4,110.5v3M374.4,547v-3M374.4,325.8v6M390.6,110.5v3M390.6,547v-3M390.6,325.8v6M406.8,110.5v3M406.8,547v-3M406.8,325.8v6M423.0,110.5v5M423.0,547v-5M423.0,325.8v6M439.2,110.5v3M439.2,547v-3M439.2,325.8v6M455.4,110.5v3M455.4,547v-3M455.4,325.8v6M471.6,110.5v3M471.6,547v-3M471.6,325.8v6M487.8,110.5v3M487.8,547v-3M487.8,325.8v6M504.0,110.5v5M504.0,547v-5M504.0,325.8v6M520.2,110.5v3M520.2,547v-3M520.2,325.8v6M536.4,110.5v3M536.4,547v-3M536.4,325.8v6M552.6,110.5v3M552.6,547v-3M552.6,325.8v6M568.8,110.5v3M568.8,547v-3M568.8,325.8v6M585.0,110.5v5M585.0,547v-5M585.0,325.8v6M601.2,110.5v3M601.2,547v-3M601.2,325.8v6M617.4,110.5v3M617.4,547v-3M617.4,325.8v6M633.6,110.5v3M633.6,547v-3M633.6,325.8v6M649.8,110.5v3M649.8,547v-3M649.8,325.8v6M666.0,110.5v5M666.0,547v-5M666.0,325.8v6M682.2,110.5v3M682.2,547v-3M682.2,325.8v6M698.4,110.5v3M698.4,547v-3M698.4,325.8v6M714.6,110.5v3M714.6,547v-3M714.6,325.8v6M730.8,110.5v3M730.8,547v-3M730.8,325.8v6M747.0,110.5v5M747.0,547v-5M747.0,325.8v6M763.2,110.5v3M763.2,547v-3M763.2,325.8v6M779.4,110.5v3M779.4,547v-3M779.4,325.8v6M795.6,110.5v3M795.6,547v-3M795.6,325.8v6M811.8,110.5v3M811.8,547v-3M811.8,325.8v6M18,121.4h3M828,121.4h-3M419.0,121.4h8M18,132.3h3M828,132.3h-3M419.0,132.3h8M18,143.2h3M828,143.2h-3M419.0,143.2h8M18,154.2h3M828,154.2h-3M419.0,154.2h8M18,165.1h5M828,165.1h-5M419.0,165.1h8M18,176.0h3M828,176.0h-3M419.0,176.0h8M18,186.9h3M828,186.9h-3M419.0,186.9h8M18,197.8h3M828,197.8h-3M419.0,197.8h8M18,208.7h3M828,208.7h-3M419.0,208.7h8M18,219.6h5M828,219.6h-5M419.0,219.6h8M18,230.5h3M828,230.5h-3M419.0,230.5h8M18,241.4h3M828,241.4h-3M419.0,241.4h8M18,252.4h3M828,252.4h-3M419.0,252.4h8M18,263.3h3M828,263.3h-3M419.0,263.3h8M18,274.2h5M828,274.2h-5M419.0,274.2h8M18,285.1h3M828,285.1h-3M419.0,285.1h8M18,296.0h3M828,296.0h-3M419.0,296.0h8M18,306.9h3M828,306.9h-3M419.0,306.9h8M18,317.8h3M828,317.8h-3M419.0,317.8h8M18,328.8h5M828,328.8h-5M419.0,328.8h8M18,339.7h3M828,339.7h-3M419.0,339.7h8M18,350.6h3M828,350.6h-3M419.0,350.6h8M18,361.5h3M828,361.5h-3M419.0,361.5h8M18,372.4h3M828,372.4h-3M419.0,372.4h8M18,383.3h5M828,383.3h-5M419.0,383.3h8M18,394.2h3M828,394.2h-3M419.0,394.2h8M18,405.1h3M828,405.1h-3M419.0,405.1h8M18,416.1h3M828,416.1h-3M419.0,416.1h8M18,427.0h3M828,427.0h-3M419.0,427.0h8M18,437.9h5M828,437.9h-5M419.0,437.9h8M18,448.8h3M828,448.8h-3M419.0,448.8h8M18,459.7h3M828,459.7h-3M419.0,459.7h8M18,470.6h3M828,470.6h-3M419.0,470.6h8M18,481.5h3M828,481.5h-3M419.0,481.5h8M18,492.4h5M828,492.4h-5M419.0,492.4h8M18,503.4h3M828,503.4h-3M419.0,503.4h8M18,514.3h3M828,514.3h-3M419.0,514.3h8M18,525.2h3M828,525.2h-3M419.0,525.2h8M18,536.1h3M828,536.1h-3M419.0,536.1h8" stroke="#d8d8d8" stroke-width="1" fill="none"/>
<path d="M18,328.75H828M423.0,110.5V547" stroke="#c8c8c8" stroke-width="1.6" fill="none"/>
<rect x="18.6" y="110.6" width="809.4" height="436.4" fill="none" stroke="#ececec" stroke-width="1.4"/>
<path d="M19.0,242.4 L20.0,244.4 L21.0,246.4 L22.0,248.5 L23.0,250.5 L24.0,252.6 L25.0,254.7 L26.0,256.7 L27.0,258.8 L28.0,260.9 L28.2,261.3 L28.2,371.5 L29.2,373.6 L30.2,375.6 L31.2,377.7 L32.2,379.7 L33.2,381.8 L34.2,383.8 L35.2,385.8 L36.2,387.7 L37.2,389.6 L38.2,391.5 L39.2,393.4 L40.2,395.2 L41.2,397.0 L42.2,398.8 L43.2,400.5 L44.2,402.1 L45.2,403.7 L46.2,405.3 L47.2,406.8 L48.2,408.2 L49.2,409.6 L50.2,410.9 L51.2,412.2 L52.2,413.4 L53.2,414.5 L54.2,415.5 L55.2,416.5 L56.2,417.4 L57.2,418.3 L58.2,419.0 L59.2,419.7 L60.2,420.3 L61.2,420.9 L62.2,421.3 L63.2,421.6 L64.2,421.6 L65.2,421.6 L66.2,421.6 L67.2,421.6 L68.2,421.6 L69.2,421.6 L70.2,421.6 L71.2,421.6 L72.2,421.5 L73.2,421.0 L74.2,420.5 L75.2,420.0 L76.2,419.3 L77.2,418.6 L78.2,417.8 L79.2,416.9 L80.2,415.9 L81.2,414.9 L82.2,413.8 L83.2,412.6 L84.2,411.4 L85.2,410.1 L86.2,408.8 L87.2,407.4 L88.2,405.9 L89.2,404.4 L90.2,402.8 L91.2,401.1 L92.2,399.5 L93.2,397.7 L94.2,396.0 L95.2,394.1 L96.2,392.3 L97.2,390.4 L98.2,388.5 L99.2,386.5 L100.2,384.6 L101.2,382.6 L102.2,380.6 L103.2,378.5 L104.2,376.5 L105.2,374.4 L106.2,372.3 L107.2,370.3 L108.2,368.2 L109.2,366.1 L109.2,255.9 L110.2,253.8 L111.2,251.8 L112.2,249.7 L113.2,247.7 L114.2,245.6 L115.2,243.6 L116.2,241.6 L117.2,239.7 L118.2,237.8 L119.2,235.9 L120.2,234.0 L121.2,232.2 L122.2,230.4 L123.2,228.6 L124.2,226.9 L125.2,225.3 L126.2,223.7 L127.2,222.1 L128.2,220.6 L129.2,219.2 L130.2,217.8 L131.2,216.5 L132.2,215.2 L133.2,214.0 L134.2,212.9 L135.2,211.9 L136.2,210.9 L137.2,210.0 L138.2,209.1 L139.2,208.4 L140.2,207.7 L141.2,207.1 L142.2,206.5 L143.2,206.1 L144.2,205.8 L145.2,205.8 L146.2,205.8 L147.2,205.8 L148.2,205.8 L149.2,205.8 L150.2,205.8 L151.2,205.8 L152.2,205.8 L153.2,205.9 L154.2,206.4 L155.2,206.9 L156.2,207.4 L157.2,208.1 L158.2,208.8 L159.2,209.6 L160.2,210.5 L161.2,211.5 L162.2,212.5 L163.2,213.6 L164.2,214.8 L165.2,216.0 L166.2,217.3 L167.2,218.6 L168.2,220.0 L169.2,221.5 L170.2,223.0 L171.2,224.6 L172.2,226.3 L173.2,227.9 L174.2,229.7 L175.2,231.4 L176.2,233.3 L177.2,235.1 L178.2,237.0 L179.2,238.9 L180.2,240.9 L181.2,242.8 L182.2,244.8 L183.2,246.8 L184.2,248.9 L185.2,250.9 L186.2,253.0 L187.2,255.1 L188.2,257.1 L189.2,259.2 L190.2,261.3 L190.2,371.5 L191.2,373.6 L192.2,375.6 L193.2,377.7 L194.2,379.7 L195.2,381.8 L196.2,383.8 L197.2,385.8 L198.2,387.7 L199.2,389.6 L200.2,391.5 L201.2,393.4 L202.2,395.2 L203.2,397.0 L204.2,398.8 L205.2,400.5 L206.2,402.1 L207.2,403.7 L208.2,405.3 L209.2,406.8 L210.2,408.2 L211.2,409.6 L212.2,410.9 L213.2,412.2 L214.2,413.4 L215.2,414.5 L216.2,415.5 L217.2,416.5 L218.2,417.4 L219.2,418.3 L220.2,419.0 L221.2,419.7 L222.2,420.3 L223.2,420.9 L224.2,421.3 L225.2,421.6 L226.2,421.6 L227.2,421.6 L228.2,421.6 L229.2,421.6 L230.2,421.6 L231.2,421.6 L232.2,421.6 L233.2,421.6 L234.2,421.5 L235.2,421.0 L236.2,420.5 L237.2,420.0 L238.2,419.3 L239.2,418.6 L240.2,417.8 L241.2,416.9 L242.2,415.9 L243.2,414.9 L244.2,413.8 L245.2,412.6 L246.2,411.4 L247.2,410.1 L248.2,408.8 L249.2,407.4 L250.2,405.9 L251.2,404.4 L252.2,402.8 L253.2,401.1 L254.2,399.5 L255.2,397.7 L256.2,396.0 L257.2,394.1 L258.2,392.3 L259.2,390.4 L260.2,388.5 L261.2,386.5 L262.2,384.6 L263.2,382.6 L264.2,380.6 L265.2,378.5 L266.2,376.5 L267.2,374.4 L268.2,372.3 L269.2,370.3 L270.2,368.2 L271.2,366.1 L271.2,255.9 L272.2,253.8 L273.2,251.8 L274.2,249.7 L275.2,247.7 L276.2,245.6 L277.2,243.6 L278.2,241.6 L279.2,239.7 L280.2,237.8 L281.2,235.9 L282.2,234.0 L283.2,232.2 L284.2,230.4 L285.2,228.6 L286.2,226.9 L287.2,225.3 L288.2,223.7 L289.2,222.1 L290.2,220.6 L291.2,219.2 L292.2,217.8 L293.2,216.5 L294.2,215.2 L295.2,214.0 L296.2,212.9 L297.2,211.9 L298.2,210.9 L299.2,210.0 L300.2,209.1 L301.2,208.4 L302.2,207.7 L303.2,207.1 L304.2,206.5 L305.2,206.1 L306.2,205.8 L307.2,205.8 L308.2,205.8 L309.2,205.8 L310.2,205.8 L311.2,205.8 L312.2,205.8 L313.2,205.8 L314.2,205.8 L315.2,205.9 L316.2,206.4 L317.2,206.9 L318.2,207.4 L319.2,208.1 L320.2,208.8 L321.2,209.6 L322.2,210.5 L323.2,211.5 L324.2,212.5 L325.2,213.6 L326.2,214.8 L327.2,216.0 L328.2,217.3 L329.2,218.6 L330.2,220.0 L331.2,221.5 L332.2,223.0 L333.2,224.6 L334.2,226.3 L335.2,227.9 L336.2,229.7 L337.2,231.4 L338.2,233.3 L339.2,235.1 L340.2,237.0 L341.2,238.9 L342.2,240.9 L343.2,242.8 L344.2,244.8 L345.2,246.8 L346.2,248.9 L347.2,250.9 L348.2,253.0 L349.2,255.1 L350.2,257.1 L351.2,259.2 L352.2,261.3 L352.2,371.5 L353.2,373.6 L354.2,375.6 L355.2,377.7 L356.2,379.7 L357.2,381.8 L358.2,383.8 L359.2,385.8 L360.2,387.7 L361.2,389.6 L362.2,391.5 L363.2,393.4 L364.2,395.2 L365.2,397.0 L366.2,398.8 L367.2,400.5 L368.2,402.1 L369.2,403.7 L370.2,405.3 L371.2,406.8 L372.2,408.2 L373.2,409.6 L374.2,410.9 L375.2,412.2 L376.2,413.4 L377.2,414.5 L378.2,415.5 L379.2,416.5 L380.2,417.4 L381.2,418.3 L382.2,419.0 L383.2,419.7 L384.2,420.3 L385.2,420.9 L386.2,421.3 L387.2,421.6 L388.2,421.6 L389.2,421.6 L390.2,421.6 L391.2,421.6 L392.2,421.6 L393.2,421.6 L394.2,421.6 L395.2,421.6 L396.2,421.5 L397.2,421.0 L398.2,420.5 L399.2,420.0 L400.2,419.3 L401.2,418.6 L402.2,417.8 L403.2,416.9 L404.2,415.9 L405.2,414.9 L406.2,413.8 L407.2,412.6 L408.2,411.4 L409.2,410.1 L410.2,408.8 L411.2,407.4 L412.2,405.9 L413.2,404.4 L414.2,402.8 L415.2,401.1 L416.2,399.5 L417.2,397.7 L418.2,396.0 L419.2,394.1 L420.2,392.3 L421.2,390.4 L422.2,388.5 L423.2,386.5 L424.2,384.6 L425.2,382.6 L426.2,380.6 L427.2,378.5 L428.2,376.5 L429.2,374.4 L430.2,372.3 L431.2,370.3 L432.2,368.2 L433.2,366.1 L433.2,255.9 L434.2,253.8 L435.2,251.8 L436.2,249.7 L437.2,247.7 L438.2,245.6 L439.2,243.6 L440.2,241.6 L441.2,239.7 L442.2,237.8 L443.2,235.9 L444.2,234.0 L445.2,232.2 L446.2,230.4 L447.2,228.6 L448.2,226.9 L449.2,225.3 L450.2,223.7 L451.2,222.1 L452.2,220.6 L453.2,219.2 L454.2,217.8 L455.2,216.5 L456.2,215.2 L457.2,214.0 L458.2,212.9 L459.2,211.9 L460.2,210.9 L461.2,210.0 L462.2,209.1 L463.2,208.4 L464.2,207.7 L465.2,207.1 L466.2,206.5 L467.2,206.1 L468.2,205.8 L469.2,205.8 L470.2,205.8 L471.2,205.8 L472.2,205.8 L473.2,205.8 L474.2,205.8 L475.2,205.8 L476.2,205.8 L477.2,205.9 L478.2,206.4 L479.2,206.9 L480.2,207.4 L481.2,208.1 L482.2,208.8 L483.2,209.6 L484.2,210.5 L485.2,211.5 L486.2,212.5 L487.2,213.6 L488.2,214.8 L489.2,216.0 L490.2,217.3 L491.2,218.6 L492.2,220.0 L493.2,221.5 L494.2,223.0 L495.2,224.6 L496.2,226.3 L497.2,227.9 L498.2,229.7 L499.2,231.4 L500.2,233.3 L501.2,235.1 L502.2,237.0 L503.2,238.9 L504.2,240.9 L505.2,242.8 L506.2,244.8 L507.2,246.8 L508.2,248.9 L509.2,250.9 L510.2,253.0 L511.2,255.1 L512.2,257.1 L513.2,259.2 L514.2,261.3 L514.2,371.5 L515.2,373.6 L516.2,375.6 L517.2,377.7 L518.2,379.7 L519.2,381.8 L520.2,383.8 L521.2,385.8 L522.2,387.7 L523.2,389.6 L524.2,391.5 L525.2,393.4 L526.2,395.2 L527.2,397.0 L528.2,398.8 L529.2,400.5 L530.2,402.1 L531.2,403.7 L532.2,405.3 L533.2,406.8 L534.2,408.2 L535.2,409.6 L536.2,410.9 L537.2,412.2 L538.2,413.4 L539.2,414.5 L540.2,415.5 L541.2,416.5 L542.2,417.4 L543.2,418.3 L544.2,419.0 L545.2,419.7 L546.2,420.3 L547.2,420.9 L548.2,421.3 L549.2,421.6 L550.2,421.6 L551.2,421.6 L552.2,421.6 L553.2,421.6 L554.2,421.6 L555.2,421.6 L556.2,421.6 L557.2,421.6 L558.2,421.5 L559.2,421.0 L560.2,420.5 L561.2,420.0 L562.2,419.3 L563.2,418.6 L564.2,417.8 L565.2,416.9 L566.2,415.9 L567.2,414.9 L568.2,413.8 L569.2,412.6 L570.2,411.4 L571.2,410.1 L572.2,408.8 L573.2,407.4 L574.2,405.9 L575.2,404.4 L576.2,402.8 L577.2,401.1 L578.2,399.5 L579.2,397.7 L580.2,396.0 L581.2,394.1 L582.2,392.3 L583.2,390.4 L584.2,388.5 L585.2,386.5 L586.2,384.6 L587.2,382.6 L588.2,380.6 L589.2,378.5 L590.2,376.5 L591.2,374.4 L592.2,372.3 L593.2,370.3 L594.2,368.2 L595.2,366.1 L595.2,255.9 L596.2,253.8 L597.2,251.8 L598.2,249.7 L599.2,247.7 L600.2,245.6 L601.2,243.6 L602.2,241.6 L603.2,239.7 L604.2,237.8 L605.2,235.9 L606.2,234.0 L607.2,232.2 L608.2,230.4 L609.2,228.6 L610.2,226.9 L611.2,225.3 L612.2,223.7 L613.2,222.1 L614.2,220.6 L615.2,219.2 L616.2,217.8 L617.2,216.5 L618.2,215.2 L619.2,214.0 L620.2,212.9 L621.2,211.9 L622.2,210.9 L623.2,210.0 L624.2,209.1 L625.2,208.4 L626.2,207.7 L627.2,207.1 L628.2,206.5 L629.2,206.1 L630.2,205.8 L631.2,205.8 L632.2,205.8 L633.2,205.8 L634.2,205.8 L635.2,205.8 L636.2,205.8 L637.2,205.8 L638.2,205.8 L639.2,205.9 L640.2,206.4 L641.2,206.9 L642.2,207.4 L643.2,208.1 L644.2,208.8 L645.2,209.6 L646.2,210.5 L647.2,211.5 L648.2,212.5 L649.2,213.6 L650.2,214.8 L651.2,216.0 L652.2,217.3 L653.2,218.6 L654.2,220.0 L655.2,221.5 L656.2,223.0 L657.2,224.6 L658.2,226.3 L659.2,227.9 L660.2,229.7 L661.2,231.4 L662.2,233.3 L663.2,235.1 L664.2,237.0 L665.2,238.9 L666.2,240.9 L667.2,242.8 L668.2,244.8 L669.2,246.8 L670.2,248.9 L671.2,250.9 L672.2,253.0 L673.2,255.1 L674.2,257.1 L675.2,259.2 L676.2,261.3 L676.2,371.5 L677.2,373.6 L678.2,375.6 L679.2,377.7 L680.2,379.7 L681.2,381.8 L682.2,383.8 L683.2,385.8 L684.2,387.7 L685.2,389.6 L686.2,391.5 L687.2,393.4 L688.2,395.2 L689.2,397.0 L690.2,398.8 L691.2,400.5 L692.2,402.1 L693.2,403.7 L694.2,405.3 L695.2,406.8 L696.2,408.2 L697.2,409.6 L698.2,410.9 L699.2,412.2 L700.2,413.4 L701.2,414.5 L702.2,415.5 L703.2,416.5 L704.2,417.4 L705.2,418.3 L706.2,419.0 L707.2,419.7 L708.2,420.3 L709.2,420.9 L710.2,421.3 L711.2,421.6 L712.2,421.6 L713.2,421.6 L714.2,421.6 L715.2,421.6 L716.2,421.6 L717.2,421.6 L718.2,421.6 L719.2,421.6 L720.2,421.5 L721.2,421.0 L722.2,420.5 L723.2,420.0 L724.2,419.3 L725.2,418.6 L726.2,417.8 L727.2,416.9 L728.2,415.9 L729.2,414.9 L730.2,413.8 L731.2,412.6 L732.2,411.4 L733.2,410.1 L734.2,408.8 L735.2,407.4 L736.2,405.9 L737.2,404.4 L738.2,402.8 L739.2,401.1 L740.2,399.5 L741.2,397.7 L742.2,396.0 L743.2,394.1 L744.2,392.3 L745.2,390.4 L746.2,388.5 L747.2,386.5 L748.2,384.6 L749.2,382.6 L750.2,380.6 L751.2,378.5 L752.2,376.5 L753.2,374.4 L754.2,372.3 L755.2,370.3 L756.2,368.2 L757.2,366.1 L757.2,255.9 L758.2,253.8 L759.2,251.8 L760.2,249.7 L761.2,247.7 L762.2,245.6 L763.2,243.6 L764.2,241.6 L765.2,239.7 L766.2,237.8 L767.2,235.9 L768.2,234.0 L769.2,232.2 L770.2,230.4 L771.2,228.6 L772.2,226.9 L773.2,225.3 L774.2,223.7 L775.2,222.1 L776.2,220.6 L777.2,219.2 L778.2,217.8 L779.2,216.5 L780.2,215.2 L781.2,214.0 L782.2,212.9 L783.2,211.9 L784.2,210.9 L785.2,210.0 L786.2,209.1 L787.2,208.4 L788.2,207.7 L789.2,207.1 L790.2,206.5 L791.2,206.1 L792.2,205.8 L793.2,205.8 L794.2,205.8 L795.2,205.8 L796.2,205.8 L797.2,205.8 L798.2,205.8 L799.2,205.8 L800.2,205.8 L801.2,205.9 L802.2,206.4 L803.2,206.9 L804.2,207.4 L805.2,208.1 L806.2,208.8 L807.2,209.6 L808.2,210.5 L809.2,211.5 L810.2,212.5 L811.2,213.6 L812.2,214.8 L813.2,216.0 L814.2,217.3 L815.2,218.6 L816.2,220.0 L817.2,221.5 L818.2,223.0 L819.2,224.6 L820.2,226.3 L821.2,227.9 L822.2,229.7 L823.2,231.4 L824.2,233.3 L825.2,235.1 L826.2,237.0 L827.0,238.5" stroke="#cc2a4a" stroke-width="1.1" fill="none"/>
<path d="M19.0,168.9 L20.0,170.9 L21.0,172.9 L22.0,175.0 L23.0,177.0 L24.0,179.1 L25.0,181.2 L26.0,183.2 L27.0,185.3 L28.0,187.4 L29.0,189.5 L30.0,191.5 L31.0,193.6 L32.0,195.6 L33.0,197.7 L34.0,199.7 L35.0,201.7 L36.0,203.6 L37.0,205.6 L38.0,207.5 L39.0,209.3 L40.0,211.2 L41.0,213.0 L42.0,214.7 L43.0,216.4 L44.0,218.1 L45.0,219.7 L46.0,221.3 L47.0,222.8 L48.0,224.2 L49.0,225.6 L50.0,227.0 L51.0,228.2 L52.0,229.4 L53.0,230.6 L54.0,231.6 L55.0,232.6 L56.0,233.5 L57.0,234.4 L58.0,235.2 L59.0,235.9 L60.0,236.5 L61.0,237.1 L62.0,237.5 L63.0,237.9 L64.0,237.9 L65.0,237.9 L66.0,237.9 L67.0,237.9 L68.0,237.9 L69.0,237.9 L70.0,237.9 L71.0,237.9 L72.0,237.8 L73.0,237.4 L74.0,237.0 L75.0,236.4 L76.0,235.7 L77.0,235.0 L78.0,234.2 L79.0,233.4 L80.0,232.4 L81.0,231.4 L82.0,230.3 L83.0,229.2 L84.0,228.0 L85.0,226.7 L86.0,225.3 L87.0,223.9 L88.0,222.5 L89.0,221.0 L90.0,219.4 L91.0,217.8 L92.0,216.1 L93.0,214.4 L94.0,212.6 L95.0,210.8 L96.0,209.0 L97.0,207.1 L98.0,205.2 L99.0,203.2 L100.0,201.3 L101.0,199.3 L102.0,197.3 L103.0,195.2 L104.0,193.2 L105.0,191.1 L106.0,189.0 L107.0,187.0 L108.0,184.9 L109.0,182.8 L110.0,180.7 L111.0,178.7 L112.0,176.6 L113.0,174.6 L114.0,172.5 L115.0,170.5 L116.0,168.5 L117.0,166.6 L118.0,164.6 L119.0,162.7 L120.0,160.9 L121.0,159.0 L122.0,157.2 L123.0,155.5 L124.0,153.8 L125.0,152.1 L126.0,150.5 L127.0,148.9 L128.0,147.4 L129.0,146.0 L130.0,144.6 L131.0,143.2 L132.0,142.0 L133.0,140.8 L134.0,139.6 L135.0,138.6 L136.0,137.6 L137.0,136.7 L138.0,135.8 L139.0,135.0 L140.0,134.3 L141.0,133.7 L142.0,133.1 L143.0,132.7 L144.0,132.3 L145.0,132.3 L146.0,132.3 L147.0,132.3 L148.0,132.3 L149.0,132.3 L150.0,132.3 L151.0,132.3 L152.0,132.3 L153.0,132.4 L154.0,132.8 L155.0,133.2 L156.0,133.8 L157.0,134.5 L158.0,135.2 L159.0,136.0 L160.0,136.8 L161.0,137.8 L162.0,138.8 L163.0,139.9 L164.0,141.0 L165.0,142.2 L166.0,143.5 L167.0,144.9 L168.0,146.3 L169.0,147.7 L170.0,149.2 L171.0,150.8 L172.0,152.4 L173.0,154.1 L174.0,155.8 L175.0,157.6 L176.0,159.4 L177.0,161.2 L178.0,163.1 L179.0,165.0 L180.0,167.0 L181.0,168.9 L182.0,170.9 L183.0,172.9 L184.0,175.0 L185.0,177.0 L186.0,179.1 L187.0,181.2 L188.0,183.2 L189.0,185.3 L190.0,187.4 L191.0,189.5 L192.0,191.5 L193.0,193.6 L194.0,195.6 L195.0,197.7 L196.0,199.7 L197.0,201.7 L198.0,203.6 L199.0,205.6 L200.0,207.5 L201.0,209.3 L202.0,211.2 L203.0,213.0 L204.0,214.7 L205.0,216.4 L206.0,218.1 L207.0,219.7 L208.0,221.3 L209.0,222.8 L210.0,224.2 L211.0,225.6 L212.0,227.0 L213.0,228.2 L214.0,229.4 L215.0,230.6 L216.0,231.6 L217.0,232.6 L218.0,233.5 L219.0,234.4 L220.0,235.2 L221.0,235.9 L222.0,236.5 L223.0,237.1 L224.0,237.5 L225.0,237.9 L226.0,237.9 L227.0,237.9 L228.0,237.9 L229.0,237.9 L230.0,237.9 L231.0,237.9 L232.0,237.9 L233.0,237.9 L234.0,237.8 L235.0,237.4 L236.0,237.0 L237.0,236.4 L238.0,235.7 L239.0,235.0 L240.0,234.2 L241.0,233.4 L242.0,232.4 L243.0,231.4 L244.0,230.3 L245.0,229.2 L246.0,228.0 L247.0,226.7 L248.0,225.3 L249.0,223.9 L250.0,222.5 L251.0,221.0 L252.0,219.4 L253.0,217.8 L254.0,216.1 L255.0,214.4 L256.0,212.6 L257.0,210.8 L258.0,209.0 L259.0,207.1 L260.0,205.2 L261.0,203.2 L262.0,201.3 L263.0,199.3 L264.0,197.3 L265.0,195.2 L266.0,193.2 L267.0,191.1 L268.0,189.0 L269.0,187.0 L270.0,184.9 L271.0,182.8 L272.0,180.7 L273.0,178.7 L274.0,176.6 L275.0,174.6 L276.0,172.5 L277.0,170.5 L278.0,168.5 L279.0,166.6 L280.0,164.6 L281.0,162.7 L282.0,160.9 L283.0,159.0 L284.0,157.2 L285.0,155.5 L286.0,153.8 L287.0,152.1 L288.0,150.5 L289.0,148.9 L290.0,147.4 L291.0,146.0 L292.0,144.6 L293.0,143.2 L294.0,142.0 L295.0,140.8 L296.0,139.6 L297.0,138.6 L298.0,137.6 L299.0,136.7 L300.0,135.8 L301.0,135.0 L302.0,134.3 L303.0,133.7 L304.0,133.1 L305.0,132.7 L306.0,132.3 L307.0,132.3 L308.0,132.3 L309.0,132.3 L310.0,132.3 L311.0,132.3 L312.0,132.3 L313.0,132.3 L314.0,132.3 L315.0,132.4 L316.0,132.8 L317.0,133.2 L318.0,133.8 L319.0,134.5 L320.0,135.2 L321.0,136.0 L322.0,136.8 L323.0,137.8 L324.0,138.8 L325.0,139.9 L326.0,141.0 L327.0,142.2 L328.0,143.5 L329.0,144.9 L330.0,146.3 L331.0,147.7 L332.0,149.2 L333.0,150.8 L334.0,152.4 L335.0,154.1 L336.0,155.8 L337.0,157.6 L338.0,159.4 L339.0,161.2 L340.0,163.1 L341.0,165.0 L342.0,167.0 L343.0,168.9 L344.0,170.9 L345.0,172.9 L346.0,175.0 L347.0,177.0 L348.0,179.1 L349.0,181.2 L350.0,183.2 L351.0,185.3 L352.0,187.4 L353.0,189.5 L354.0,191.5 L355.0,193.6 L356.0,195.6 L357.0,197.7 L358.0,199.7 L359.0,201.7 L360.0,203.6 L361.0,205.6 L362.0,207.5 L363.0,209.3 L364.0,211.2 L365.0,213.0 L366.0,214.7 L367.0,216.4 L368.0,218.1 L369.0,219.7 L370.0,221.3 L371.0,222.8 L372.0,224.2 L373.0,225.6 L374.0,227.0 L375.0,228.2 L376.0,229.4 L377.0,230.6 L378.0,231.6 L379.0,232.6 L380.0,233.5 L381.0,234.4 L382.0,235.2 L383.0,235.9 L384.0,236.5 L385.0,237.1 L386.0,237.5 L387.0,237.9 L388.0,237.9 L389.0,237.9 L390.0,237.9 L391.0,237.9 L392.0,237.9 L393.0,237.9 L394.0,237.9 L395.0,237.9 L396.0,237.8 L397.0,237.4 L398.0,237.0 L399.0,236.4 L400.0,235.7 L401.0,235.0 L402.0,234.2 L403.0,233.4 L404.0,232.4 L405.0,231.4 L406.0,230.3 L407.0,229.2 L408.0,228.0 L409.0,226.7 L410.0,225.3 L411.0,223.9 L412.0,222.5 L413.0,221.0 L414.0,219.4 L415.0,217.8 L416.0,216.1 L417.0,214.4 L418.0,212.6 L419.0,210.8 L420.0,209.0 L421.0,207.1 L422.0,205.2 L423.0,203.2 L424.0,201.3 L425.0,199.3 L426.0,197.3 L427.0,195.2 L428.0,193.2 L429.0,191.1 L430.0,189.0 L431.0,187.0 L432.0,184.9 L433.0,182.8 L434.0,180.7 L435.0,178.7 L436.0,176.6 L437.0,174.6 L438.0,172.5 L439.0,170.5 L440.0,168.5 L441.0,166.6 L442.0,164.6 L443.0,162.7 L444.0,160.9 L445.0,159.0 L446.0,157.2 L447.0,155.5 L448.0,153.8 L449.0,152.1 L450.0,150.5 L451.0,148.9 L452.0,147.4 L453.0,146.0 L454.0,144.6 L455.0,143.2 L456.0,142.0 L457.0,140.8 L458.0,139.6 L459.0,138.6 L460.0,137.6 L461.0,136.7 L462.0,135.8 L463.0,135.0 L464.0,134.3 L465.0,133.7 L466.0,133.1 L467.0,132.7 L468.0,132.3 L469.0,132.3 L470.0,132.3 L471.0,132.3 L472.0,132.3 L473.0,132.3 L474.0,132.3 L475.0,132.3 L476.0,132.3 L477.0,132.4 L478.0,132.8 L479.0,133.2 L480.0,133.8 L481.0,134.5 L482.0,135.2 L483.0,136.0 L484.0,136.8 L485.0,137.8 L486.0,138.8 L487.0,139.9 L488.0,141.0 L489.0,142.2 L490.0,143.5 L491.0,144.9 L492.0,146.3 L493.0,147.7 L494.0,149.2 L495.0,150.8 L496.0,152.4 L497.0,154.1 L498.0,155.8 L499.0,157.6 L500.0,159.4 L501.0,161.2 L502.0,163.1 L503.0,165.0 L504.0,167.0 L505.0,168.9 L506.0,170.9 L507.0,172.9 L508.0,175.0 L509.0,177.0 L510.0,179.1 L511.0,181.2 L512.0,183.2 L513.0,185.3 L514.0,187.4 L515.0,189.5 L516.0,191.5 L517.0,193.6 L518.0,195.6 L519.0,197.7 L520.0,199.7 L521.0,201.7 L522.0,203.6 L523.0,205.6 L524.0,207.5 L525.0,209.3 L526.0,211.2 L527.0,213.0 L528.0,214.7 L529.0,216.4 L530.0,218.1 L531.0,219.7 L532.0,221.3 L533.0,222.8 L534.0,224.2 L535.0,225.6 L536.0,227.0 L537.0,228.2 L538.0,229.4 L539.0,230.6 L540.0,231.6 L541.0,232.6 L542.0,233.5 L543.0,234.4 L544.0,235.2 L545.0,235.9 L546.0,236.5 L547.0,237.1 L548.0,237.5 L549.0,237.9 L550.0,237.9 L551.0,237.9 L552.0,237.9 L553.0,237.9 L554.0,237.9 L555.0,237.9 L556.0,237.9 L557.0,237.9 L558.0,237.8 L559.0,237.4 L560.0,237.0 L561.0,236.4 L562.0,235.7 L563.0,235.0 L564.0,234.2 L565.0,233.4 L566.0,232.4 L567.0,231.4 L568.0,230.3 L569.0,229.2 L570.0,228.0 L571.0,226.7 L572.0,225.3 L573.0,223.9 L574.0,222.5 L575.0,221.0 L576.0,219.4 L577.0,217.8 L578.0,216.1 L579.0,214.4 L580.0,212.6 L581.0,210.8 L582.0,209.0 L583.0,207.1 L584.0,205.2 L585.0,203.2 L586.0,201.3 L587.0,199.3 L588.0,197.3 L589.0,195.2 L590.0,193.2 L591.0,191.1 L592.0,189.0 L593.0,187.0 L594.0,184.9 L595.0,182.8 L596.0,180.7 L597.0,178.7 L598.0,176.6 L599.0,174.6 L600.0,172.5 L601.0,170.5 L602.0,168.5 L603.0,166.6 L604.0,164.6 L605.0,162.7 L606.0,160.9 L607.0,159.0 L608.0,157.2 L609.0,155.5 L610.0,153.8 L611.0,152.1 L612.0,150.5 L613.0,148.9 L614.0,147.4 L615.0,146.0 L616.0,144.6 L617.0,143.2 L618.0,142.0 L619.0,140.8 L620.0,139.6 L621.0,138.6 L622.0,137.6 L623.0,136.7 L624.0,135.8 L625.0,135.0 L626.0,134.3 L627.0,133.7 L628.0,133.1 L629.0,132.7 L630.0,132.3 L631.0,132.3 L632.0,132.3 L633.0,132.3 L634.0,132.3 L635.0,132.3 L636.0,132.3 L637.0,132.3 L638.0,132.3 L639.0,132.4 L640.0,132.8 L641.0,133.2 L642.0,133.8 L643.0,134.5 L644.0,135.2 L645.0,136.0 L646.0,136.8 L647.0,137.8 L648.0,138.8 L649.0,139.9 L650.0,141.0 L651.0,142.2 L652.0,143.5 L653.0,144.9 L654.0,146.3 L655.0,147.7 L656.0,149.2 L657.0,150.8 L658.0,152.4 L659.0,154.1 L660.0,155.8 L661.0,157.6 L662.0,159.4 L663.0,161.2 L664.0,163.1 L665.0,165.0 L666.0,167.0 L667.0,168.9 L668.0,170.9 L669.0,172.9 L670.0,175.0 L671.0,177.0 L672.0,179.1 L673.0,181.2 L674.0,183.2 L675.0,185.3 L676.0,187.4 L677.0,189.5 L678.0,191.5 L679.0,193.6 L680.0,195.6 L681.0,197.7 L682.0,199.7 L683.0,201.7 L684.0,203.6 L685.0,205.6 L686.0,207.5 L687.0,209.3 L688.0,211.2 L689.0,213.0 L690.0,214.7 L691.0,216.4 L692.0,218.1 L693.0,219.7 L694.0,221.3 L695.0,222.8 L696.0,224.2 L697.0,225.6 L698.0,227.0 L699.0,228.2 L700.0,229.4 L701.0,230.6 L702.0,231.6 L703.0,232.6 L704.0,233.5 L705.0,234.4 L706.0,235.2 L707.0,235.9 L708.0,236.5 L709.0,237.1 L710.0,237.5 L711.0,237.9 L712.0,237.9 L713.0,237.9 L714.0,237.9 L715.0,237.9 L716.0,237.9 L717.0,237.9 L718.0,237.9 L719.0,237.9 L720.0,237.8 L721.0,237.4 L722.0,237.0 L723.0,236.4 L724.0,235.7 L725.0,235.0 L726.0,234.2 L727.0,233.4 L728.0,232.4 L729.0,231.4 L730.0,230.3 L731.0,229.2 L732.0,228.0 L733.0,226.7 L734.0,225.3 L735.0,223.9 L736.0,222.5 L737.0,221.0 L738.0,219.4 L739.0,217.8 L740.0,216.1 L741.0,214.4 L742.0,212.6 L743.0,210.8 L744.0,209.0 L745.0,207.1 L746.0,205.2 L747.0,203.2 L748.0,201.3 L749.0,199.3 L750.0,197.3 L751.0,195.2 L752.0,193.2 L753.0,191.1 L754.0,189.0 L755.0,187.0 L756.0,184.9 L757.0,182.8 L758.0,180.7 L759.0,178.7 L760.0,176.6 L761.0,174.6 L762.0,172.5 L763.0,170.5 L764.0,168.5 L765.0,166.6 L766.0,164.6 L767.0,162.7 L768.0,160.9 L769.0,159.0 L770.0,157.2 L771.0,155.5 L772.0,153.8 L773.0,152.1 L774.0,150.5 L775.0,148.9 L776.0,147.4 L777.0,146.0 L778.0,144.6 L779.0,143.2 L780.0,142.0 L781.0,140.8 L782.0,139.6 L783.0,138.6 L784.0,137.6 L785.0,136.7 L786.0,135.8 L787.0,135.0 L788.0,134.3 L789.0,133.7 L790.0,133.1 L791.0,132.7 L792.0,132.3 L793.0,132.3 L794.0,132.3 L795.0,132.3 L796.0,132.3 L797.0,132.3 L798.0,132.3 L799.0,132.3 L800.0,132.3 L801.0,132.4 L802.0,132.8 L803.0,133.2 L804.0,133.8 L805.0,134.5 L806.0,135.2 L807.0,136.0 L808.0,136.8 L809.0,137.8 L810.0,138.8 L811.0,139.9 L812.0,141.0 L813.0,142.2 L814.0,143.5 L815.0,144.9 L816.0,146.3 L817.0,147.7 L818.0,149.2 L819.0,150.8 L820.0,152.4 L821.0,154.1 L822.0,155.8 L823.0,157.6 L824.0,159.4 L825.0,161.2 L826.0,163.1 L827.0,165.0" stroke="#e2e68a" stroke-width="1.2" fill="none"/>
<path d="M19.0,399.5 L28.2,399.5 L28.2,509.7 L109.2,509.7 L109.2,399.5 L190.2,399.5 L190.2,509.7 L271.2,509.7 L271.2,399.5 L352.2,399.5 L352.2,509.7 L433.2,509.7 L433.2,399.5 L514.2,399.5 L514.2,509.7 L595.2,509.7 L595.2,399.5 L676.2,399.5 L676.2,509.7 L757.2,509.7 L757.2,399.5 L827.0,399.5" stroke="#c0eaee" stroke-width="1.3" fill="none"/>
</svg>

<!-- left markers -->
<svg class="a" style="left:2px;top:174px" width="16" height="11"><path d="M0.5,0.5H10.5L14.5,5.25L10.5,10H0.5Z" fill="#f2f25a"/><path d="M5.5,3.2L7.3,2.2V8.6" stroke="#222" stroke-width="1.4" fill="none"/></svg>
<svg class="a" style="left:2px;top:303.5px" width="16" height="11"><path d="M0.5,0.5H10.5L14.5,5.25L10.5,10H0.5Z" fill="#e0202a"/><text x="2.5" y="8.5" font-size="7.5" font-weight="bold" fill="#600" font-family="Liberation Sans">M</text></svg>
<svg class="a" style="left:2px;top:449px" width="16" height="11"><path d="M0.5,0.5H10.5L14.5,5.25L10.5,10H0.5Z" fill="#c8f2f2"/><text x="5" y="8.5" font-size="8" font-weight="bold" fill="#124" font-family="Liberation Sans">2</text></svg>
<svg class="a" style="left:829px;top:193px" width="15" height="11"><path d="M14.5,0.5H4.5L0.5,5.25L4.5,10H14.5Z" fill="#f2f25a"/><text x="6" y="8.5" font-size="8" font-weight="bold" fill="#222" font-family="Liberation Sans">T</text></svg>
<!-- trigger position marker -->
<svg class="a" style="left:417.5px;top:97.5px" width="11" height="12"><path d="M0.5,0.5H10.5V7L5.5,11.5L0.5,7Z" fill="#f09a30"/><text x="2.8" y="8" font-size="7.5" font-weight="bold" fill="#603000" font-family="Liberation Sans">T</text></svg>

<div class="t" style="left:34.6px;top:527.6px;font-size:10.6px;color:#c42828;white-space:pre;transform:scaleX(0.915);transform-origin:0 0">MATH Scale:  500mV</div>
<div class="a" style="left:18px;top:550.4px;width:75px;height:15.2px;background:#000"></div>
<div class="t" style="left:20px;top:553.5px;font-size:10px;color:#d0d880">CH1</div><div class="t" style="left:41.5px;top:552.5px;font-size:11.5px;color:#d0d880">∿</div><div class="t" style="left:54.8px;top:553.5px;font-size:10px;color:#d0d880">500mV</div>
<div class="a" style="left:106.4px;top:550.5px;width:74.4px;height:15.5px;background:#000"></div>
<div class="a" style="left:108px;top:552px;width:21px;height:11.5px;background:#a8ecf4"></div>
<div class="t" style="left:108.5px;top:553.5px;font-size:10px;color:#0c3640">CH2</div>
<div class="t" style="left:130.5px;top:552.5px;font-size:11px;color:#b8e8ec">∿</div><div class="t" style="left:143.2px;top:553.5px;font-size:10px;color:#b8e8ec">500mV</div>
<div class="a" style="left:755px;top:550.5px;width:72px;height:15px;background:#000"></div>
<div class="t" style="left:757px;top:553.5px;font-size:10px;color:#d8a060">Time: 500.0us</div>

<div id="panel" class="a"></div>
<div class="a" style="left:844px;top:73px;width:1px;height:495px;background:#e8e8e8"></div>
<div class="lbl" style="left:854.6px;top:82.6px;font-size:8.7px">Connect:</div>
<svg class="a" style="left:891.5px;top:77.5px" width="18" height="18"><circle cx="9" cy="9" r="8" fill="#e88a2a" stroke="#b86a20" stroke-width="1"/></svg>
<div class="a" style="left:844px;top:73px;width:156px;height:1px;background:#cfcfcf"></div>
<div class="a" style="left:846px;top:97px;width:154px;height:1px;background:#dadada"></div>
<div class="a" style="left:990px;top:97px;width:10px;height:14px;background:#f0f0f0"></div>
<svg class="a" style="left:991px;top:100px" width="9" height="8"><path d="M1,6L4.5,2.5L8,6" stroke="#333" stroke-width="1.3" fill="none"/></svg>
<div class="a" style="left:990px;top:111px;width:10px;height:457px;background:#e8e8e8"></div><div class="a" style="left:990.5px;top:111px;width:9.5px;height:342px;background:#cdcdcd"></div>
<div class="grp" style="left:851px;top:107px;width:134px;height:91px"></div>
<div class="lbl" style="left:856px;top:103.5px;font-size:8.6px;background:#f0f0f0;padding:0 2px">Horizontal</div>
<div class="lbl" style="left:853px;top:121.3px;font-size:8.3px">Time / DIV</div>
<div class="combo" style="left:853px;top:133px;width:55px;height:17.5px"><span>500.0us</span><div class="chev"></div></div>
<div class="lbl" style="left:853px;top:158px;font-size:8.8px">Format</div>
<div class="combo" style="left:853px;top:173px;width:55px;height:18px"><span><span style="position:static;transform:none;color:#6a6a6a;-webkit-text-stroke:0.18px #6a6a6a">Y - T</span></span><div class="chev"></div></div>
<svg class="a" style="left:916px;top:120px" width="62" height="62" viewBox="0 0 62 62">
<defs><linearGradient id="kr151" x1="0" y1="0" x2="0" y2="1"><stop offset="0" stop-color="#c8c8c8"/><stop offset="1" stop-color="#989898"/></linearGradient></defs>
<circle cx="31" cy="31" r="30" fill="#ececec" stroke="#5a5a5a" stroke-width="0.9"/>
<circle cx="31" cy="31" r="28.2" fill="url(#kr151)" stroke="#8a8a8a" stroke-width="0.6"/>
<circle cx="31" cy="31" r="23.5" fill="#2208d0" stroke="#1a0a90" stroke-width="0.8"/>
<path d="M32.3,25.7L35.5,13.0" stroke="#c8c0f8" stroke-width="1.9"/>
<path d="M5,56.5L10.5,51M57,56.5L51.5,51" stroke="#222" stroke-width="1.2"/>
</svg>
<div class="grp" style="left:851px;top:207px;width:134px;height:120px"></div>
<div class="lbl" style="left:856px;top:203px;font-size:8.6px;background:#f0f0f0;padding:0 2px">Vertical</div>
<div class="combo" style="left:853px;top:220.5px;width:55px;height:17px"><span>CH2</span><div class="chev"></div></div>
<div class="a" style="left:853px;top:242.5px;width:53px;height:17px;background:#fff;border:1px solid #c8c8c8"></div>
<div class="lbl" style="left:856px;top:246.5px;font-size:8.6px">500mV</div>
<div class="a" style="left:894px;top:243.5px;width:11px;height:15px;background:#ececec;border-left:1px solid #ddd"></div>
<svg class="a" style="left:895px;top:244px" width="10" height="14"><path d="M2.5,5L5,2.5L7.5,5z M2.5,9L5,11.5L7.5,9z" fill="#333"/></svg>
<div class="a" style="left:911.5px;top:222px;width:10.5px;height:10px;background:#fff;border:1px solid #444"></div>
<svg class="a" style="left:911.5px;top:221px" width="12" height="12"><path d="M2.5,6L5,9L10,2.5" stroke="#333" stroke-width="1.2" fill="none"/></svg>
<div class="lbl" style="left:924.5px;top:223px;font-size:8.6px">ON/OFF</div>
<div class="combo" style="left:853px;top:264px;width:55px;height:17.5px"><span>AC</span><div class="chev"></div></div>
<div class="combo" style="left:853px;top:287px;width:55px;height:17px"><span>x1</span><div class="chev"></div></div>
<svg class="a" style="left:916px;top:240.5px" width="62" height="62" viewBox="0 0 62 62">
<defs><linearGradient id="kr271" x1="0" y1="0" x2="0" y2="1"><stop offset="0" stop-color="#c8c8c8"/><stop offset="1" stop-color="#989898"/></linearGradient></defs>
<circle cx="31" cy="31" r="30" fill="#ececec" stroke="#5a5a5a" stroke-width="0.9"/>
<circle cx="31" cy="31" r="28.2" fill="url(#kr271)" stroke="#8a8a8a" stroke-width="0.6"/>
<circle cx="31" cy="31" r="23.5" fill="#9af2f8" stroke="#4a8a90" stroke-width="1.6"/>
<path d="M27.5,26.7L19.4,16.6" stroke="#3a4a50" stroke-width="1.9"/>
<path d="M5,56.5L10.5,51M57,56.5L51.5,51" stroke="#222" stroke-width="1.2"/>
</svg>
<div class="grp" style="left:851px;top:338px;width:134px;height:193px"></div>
<div class="lbl" style="left:856px;top:334px;font-size:8.6px;background:#f0f0f0;padding:0 2px">Trigger</div>
<div class="lbl" style="left:853px;top:355.6px;font-size:8.8px">Trigger Mode</div>
<div class="combo" style="left:923px;top:349.5px;width:54.5px;height:17px"><span>Edge</span><div class="chev"></div></div>
<div class="lbl" style="left:853px;top:379.4px;font-size:8.8px">Trigger Sweep</div>
<div class="combo" style="left:923px;top:374px;width:54.5px;height:17px"><span>AUTO</span><div class="chev"></div></div>
<div class="lbl" style="left:853px;top:403.4px;font-size:8.8px">Trigger Source</div>
<div class="combo" style="left:923px;top:398.5px;width:54.5px;height:17px"><span>CH1</span><div class="chev"></div></div>
<div class="lbl" style="left:853px;top:427px;font-size:8.8px">Trigger Slope</div>
<div class="combo" style="left:923px;top:423px;width:54.5px;height:17px"><span>+</span><div class="chev"></div></div>
<div class="lbl" style="left:854px;top:558.5px;font-size:8.8px">Move Waveform</div>
<div class="a" style="left:918px;top:568px;width:54px;height:1px;background:#c4c4c4"></div>

<div id="status" class="a"></div>
<div class="t d" style="left:2px;top:574px;font-size:10.1px;color:#222">Connected</div>
<div class="a" style="left:897px;top:569px;width:90px;height:16px;border-left:1px solid #d0d0d0;border-top:1px solid #d0d0d0"></div>
<div class="a" style="left:898px;top:570px;width:85.5px;height:15px;overflow:hidden"><div class="t" style="left:3.5px;top:3.3px;font-size:10.4px;color:#222;white-space:pre">28-04-2016  10:13</div></div><svg class="a" style="left:990px;top:575px" width="10" height="10"><path d="M8,2h1M8,5h1M5,5h1M8,8h1M5,8h1M2,8h1" stroke="#a0a0a0" stroke-width="1"/></svg>
</body></html>
